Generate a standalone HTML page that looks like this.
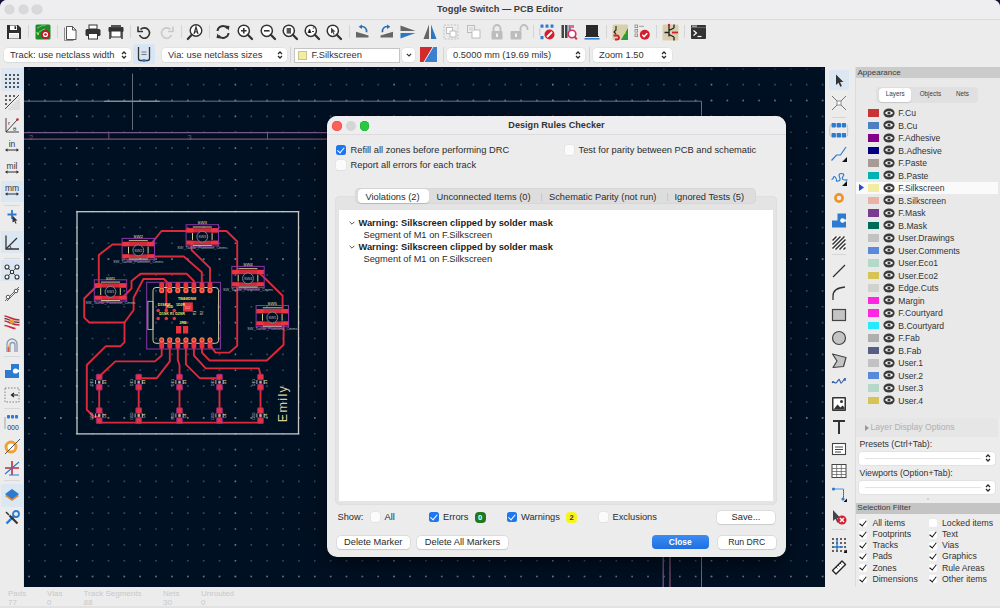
<!DOCTYPE html><html><head><meta charset="utf-8"><style>
*{box-sizing:border-box;margin:0;padding:0}
html,body{width:1000px;height:608px;overflow:hidden;background:#10143a;font-family:"Liberation Sans",sans-serif;color:#2a2a2a}
.a{position:absolute}
svg{overflow:visible}
#win{position:absolute;left:0;top:0;width:1000px;height:608px;background:#ececec;border-radius:7px 7px 0 0;overflow:hidden}
.tl{width:9.5px;height:9.5px;border-radius:50%;background:#d9d9db;top:4.75px;box-shadow:0 0 0 .5px #d2d2d4}
.dd{background:#fff;border-radius:4px;height:14px;font-size:9.35px;line-height:14px;padding-left:6px;color:#333;box-shadow:0 0 0 .5px #dcdcdc,0 .5px 1px rgba(0,0,0,.08);white-space:nowrap}
.sep{width:1px;background:#d4d4d4}
.st{font-size:8px;color:#c8c8c8;line-height:8px;white-space:nowrap}
.lbl{font-size:9.3px;line-height:12px;white-space:nowrap;color:#2b2b2b}
.cbx{width:9.5px;height:9.5px;border-radius:2.5px;background:#fbfbfb;box-shadow:0 0 0 .5px #e0e0e0,0 .5px 1px rgba(0,0,0,.06)}
.cbx.on{background:#1f76ee;box-shadow:none}
.cbx.on::after{content:"";position:absolute;left:2.6px;top:0.6px;width:3px;height:5.5px;border:solid #fff;border-width:0 1.6px 1.6px 0;transform:rotate(40deg)}
.btn{height:13.5px;background:#fff;border-radius:4px;box-shadow:0 0 0 .5px #cfcfcf,0 .5px 1px rgba(0,0,0,.15);font-size:9.3px;line-height:13.5px;text-align:center;color:#2b2b2b;white-space:nowrap}
.ly{position:absolute;left:0;width:147px;height:12.5px}
.ly .sw{position:absolute;left:15px;top:2.5px;width:11px;height:7.5px}
.ly .eye{position:absolute;left:30px;top:1.25px;line-height:0}.ly .eye svg{display:block}
.ly .t{position:absolute;left:45px;top:0.7px;font-size:8.6px;line-height:12.5px;color:#333;white-space:nowrap}
.sf{position:absolute;font-size:8.7px;line-height:11px;color:#333;white-space:nowrap}
.ck{position:absolute;width:8px;height:8px;background:#fff;border-radius:2px}
.ck.no::after{display:none}
.ck::after{content:"";position:absolute;left:2.4px;top:-0.6px;width:2.6px;height:6px;border:solid #111;border-width:0 1.4px 1.4px 0;transform:rotate(38deg)}
</style></head><body><div id="win"><div class="a" style="left:0;top:0;width:1000px;height:20px;background:#eeeef0;border-bottom:1px solid #dcdcdc"></div><div class="a tl" style="left:4.75px"></div><div class="a tl" style="left:18.5px"></div><div class="a tl" style="left:32.25px"></div><div class="a" style="left:0;width:1000px;top:3px;text-align:center;font-size:9.3px;font-weight:bold;color:#3c3c3c;line-height:12px">Toggle Switch — PCB Editor</div><svg class="a" style="left:6px;top:23.5px" width="16" height="16" viewBox="0 0 16 16"><path d="M1 1h11l3 3v11H1z" fill="#2e2e2e"/><rect x="4" y="1.5" width="7" height="4.5" fill="#fff"/><rect x="8.5" y="2.2" width="1.6" height="2.8" fill="#2e2e2e"/><rect x="3" y="9" width="10" height="5.5" fill="#fff"/><path d="M4 11h8M4 13h8" stroke="#bbb" stroke-width=".6"/></svg><div class="a sep" style="left:28px;top:25px;height:13px"></div><svg class="a" style="left:35px;top:23.5px" width="16" height="16" viewBox="0 0 16 16"><rect x="0.5" y="0.5" width="15" height="15" rx="1.5" fill="#1f8a2a"/><path d="M2 4c3-1 5-3 9-3M1 9c4 0 6-4 9-4" stroke="#6fd16f" stroke-width="1" fill="none"/><circle cx="3" cy="10" r="1" fill="#e8e050"/><circle cx="10.5" cy="10.5" r="4.6" fill="#c8142a"/><circle cx="10.5" cy="10.5" r="2.6" fill="#fff"/><circle cx="10.5" cy="10.5" r="1.3" fill="#c8142a"/></svg><div class="a sep" style="left:56.5px;top:25px;height:13px"></div><svg class="a" style="left:63px;top:23.5px" width="16" height="16" viewBox="0 0 16 16"><path d="M3.5 2.5h6l3.5 3.5v9.5h-9.5z" fill="#fff" stroke="#444" stroke-width=".9"/><path d="M9.5 2.5v3.5h3.5" fill="none" stroke="#444" stroke-width=".9"/><path d="M1.5 3.5v13h9" fill="none" stroke="#777" stroke-width=".8"/></svg><svg class="a" style="left:85px;top:23.5px" width="16" height="16" viewBox="0 0 16 16"><rect x="4" y="1" width="8" height="4" fill="#fff" stroke="#333" stroke-width="1"/><rect x="0.5" y="5" width="15" height="7" rx="1.5" fill="#333"/><rect x="3.5" y="9.5" width="9" height="5.5" fill="#fff" stroke="#333" stroke-width="1"/></svg><svg class="a" style="left:107.5px;top:23.5px" width="16" height="16" viewBox="0 0 16 16"><rect x="0.5" y="3" width="15" height="5" rx="1" fill="#333"/><rect x="3" y="1" width="10" height="2.5" fill="#555"/><rect x="3" y="7" width="10" height="6" fill="#fff" stroke="#333"/><path d="M2 8v7M14 8v7" stroke="#333" stroke-width="1.5"/></svg><div class="a sep" style="left:129.5px;top:25px;height:13px"></div><svg class="a" style="left:135.5px;top:23.5px" width="16" height="16" viewBox="0 0 16 16"><path d="M4.5 5.5A5.2 5.2 0 1 1 3.5 11" fill="none" stroke="#333" stroke-width="1.6"/><path d="M2 2.5v5h5" fill="none" stroke="#333" stroke-width="1.6"/></svg><svg class="a" style="left:159px;top:23.5px" width="16" height="16" viewBox="0 0 16 16"><path d="M11.5 5.5A5.2 5.2 0 1 0 12.5 11" fill="none" stroke="#c9c9c9" stroke-width="1.6"/><path d="M14 2.5v5h-5" fill="none" stroke="#c9c9c9" stroke-width="1.6"/></svg><div class="a sep" style="left:180.5px;top:25px;height:13px"></div><svg class="a" style="left:187px;top:23.5px" width="16" height="16" viewBox="0 0 16 16"><circle cx="9" cy="6.5" r="5.8" fill="#fff" stroke="#333" stroke-width="1.4"/><path d="M4.8 10.8L0.8 15" stroke="#333" stroke-width="2.2" stroke-linecap="round"/><path d="M7 10l2-7 2 7M7.7 7.8h2.6" fill="none" stroke="#333" stroke-width="1.2"/></svg><div class="a sep" style="left:208.5px;top:25px;height:13px"></div><svg class="a" style="left:214.5px;top:23.5px" width="16" height="16" viewBox="0 0 16 16"><path d="M2.5 7A5.5 5.5 0 0 1 12.5 4.5" fill="none" stroke="#333" stroke-width="2"/><path d="M13.5 9A5.5 5.5 0 0 1 3.5 11.5" fill="none" stroke="#333" stroke-width="2"/><path d="M10 1.5l4.5 0.5-0.8 4.5z" fill="#333"/><path d="M6 14.5l-4.5-0.5 0.8-4.5z" fill="#333"/></svg><svg class="a" style="left:237px;top:23.5px" width="16" height="16" viewBox="0 0 16 16"><circle cx="6.8" cy="6.8" r="5.6" fill="#fff" stroke="#333" stroke-width="1.5"/><path d="M10.8 10.8L15 15" stroke="#333" stroke-width="2.3" stroke-linecap="round"/><path d="M4 6.8h5.6M6.8 4v5.6" stroke="#333" stroke-width="1.6"/></svg><svg class="a" style="left:259.5px;top:23.5px" width="16" height="16" viewBox="0 0 16 16"><circle cx="6.8" cy="6.8" r="5.6" fill="#fff" stroke="#333" stroke-width="1.5"/><path d="M10.8 10.8L15 15" stroke="#333" stroke-width="2.3" stroke-linecap="round"/><path d="M4 6.8h5.6" stroke="#333" stroke-width="1.6"/></svg><svg class="a" style="left:282px;top:23.5px" width="16" height="16" viewBox="0 0 16 16"><circle cx="6.8" cy="6.8" r="5.6" fill="#fff" stroke="#333" stroke-width="1.5"/><path d="M10.8 10.8L15 15" stroke="#333" stroke-width="2.3" stroke-linecap="round"/><rect x="4.6" y="4" width="4.4" height="5.6" fill="#555"/></svg><svg class="a" style="left:304px;top:23.5px" width="16" height="16" viewBox="0 0 16 16"><circle cx="6.8" cy="6.8" r="5.6" fill="#fff" stroke="#333" stroke-width="1.5"/><path d="M10.8 10.8L15 15" stroke="#333" stroke-width="2.3" stroke-linecap="round"/><path d="M4 9l1.5-4 1.5 4M8 7.5h2" stroke="#444" stroke-width="1"/><circle cx="9.5" cy="4" r=".8" fill="#444"/></svg><svg class="a" style="left:326px;top:23.5px" width="16" height="16" viewBox="0 0 16 16"><circle cx="6.8" cy="6.8" r="5.6" fill="#fff" stroke="#333" stroke-width="1.5"/><path d="M10.8 10.8L15 15" stroke="#333" stroke-width="2.3" stroke-linecap="round"/><path d="M5 3.5l4.5 4-2 .3 1.2 2.5-1 .5-1.2-2.5-1.5 1.2z" fill="#444"/></svg><div class="a sep" style="left:348.5px;top:25px;height:13px"></div><svg class="a" style="left:354.5px;top:23.5px" width="16" height="16" viewBox="0 0 16 16"><path d="M1 7.7L13.5 11.5V13.5H1z" fill="#666"/><path d="M11.5 8.2A4.6 4.6 0 0 0 6.2 2.6" fill="none" stroke="#2b6fb0" stroke-width="1.7"/><path d="M3.6 2.8l3.4-2.3v4.6z" fill="#2b6fb0"/></svg><svg class="a" style="left:377.5px;top:23.5px" width="16" height="16" viewBox="0 0 16 16"><path d="M15 7.7L2.5 11.5V13.5H15z" fill="#666"/><path d="M4.5 8.2A4.6 4.6 0 0 1 9.8 2.6" fill="none" stroke="#2b6fb0" stroke-width="1.7"/><path d="M12.4 2.8l-3.4-2.3v4.6z" fill="#2b6fb0"/></svg><svg class="a" style="left:399.5px;top:23.5px" width="16" height="16" viewBox="0 0 16 16"><path d="M0.5 1.5L15.5 7H0.5z" fill="#666"/><path d="M0.5 9H15.5L0.5 14.5z" fill="#2b78c2"/></svg><svg class="a" style="left:421.5px;top:23.5px" width="16" height="16" viewBox="0 0 16 16"><path d="M7 0.5L1.5 15H7z" fill="#666"/><path d="M9 0.5V15h5.5z" fill="#2b78c2"/></svg><svg class="a" style="left:443px;top:23.5px" width="16" height="16" viewBox="0 0 16 16"><rect x="1" y="1" width="14" height="14" fill="none" stroke="#c4c4c4" stroke-dasharray="2 1.3"/><rect x="3.5" y="3.5" width="6" height="6" fill="#fff" stroke="#bcbcbc"/><rect x="7" y="7" width="6" height="6" fill="#fff" stroke="#bcbcbc"/></svg><svg class="a" style="left:466px;top:23.5px" width="16" height="16" viewBox="0 0 16 16"><rect x="1.5" y="1.5" width="7" height="7" fill="#fff" stroke="#bcbcbc"/><rect x="6" y="6" width="8" height="8" fill="#fff" stroke="#bcbcbc"/><rect x="2.5" y="2.5" width="5" height="5" fill="#ddd"/></svg><svg class="a" style="left:488.5px;top:23.5px" width="16" height="16" viewBox="0 0 16 16"><path d="M4.5 7V4.5a3.5 3.5 0 0 1 7 0V7" fill="none" stroke="#bdbdbd" stroke-width="1.8"/><rect x="2.5" y="7" width="11" height="8.5" rx="1" fill="#bdbdbd"/><rect x="7.2" y="9.5" width="1.6" height="3.5" fill="#fff"/></svg><svg class="a" style="left:509.5px;top:23.5px" width="16" height="16" viewBox="0 0 16 16"><path d="M10.5 7V4.5a3.5 3.5 0 0 1 7 0V6" fill="none" stroke="#bdbdbd" stroke-width="1.8"/><rect x="0.5" y="7" width="11" height="8.5" rx="1" fill="#bdbdbd"/><rect x="5.2" y="9.5" width="1.6" height="3.5" fill="#fff"/></svg><div class="a sep" style="left:533px;top:25px;height:13px"></div><svg class="a" style="left:538.5px;top:23.5px" width="16" height="16" viewBox="0 0 16 16"><g fill="#2f7bcf"><rect x="1.5" y="0.5" width="3" height="3.3" rx=".6"/><rect x="6.5" y="0.5" width="3" height="3.3" rx=".6"/><rect x="11.5" y="0.5" width="3" height="3.3" rx=".6"/><rect x="1.5" y="12" width="3" height="3.3" rx=".6"/></g><path d="M0.8 4.5v7" stroke="#aaa" stroke-width=".6"/><circle cx="10.5" cy="10.5" r="5" fill="#d51d2e"/><path d="M8 13l5-5" stroke="#fff" stroke-width="1.8"/></svg><svg class="a" style="left:561px;top:23.5px" width="16" height="16" viewBox="0 0 16 16"><g fill="#444"><rect x="0.5" y="1" width="2.5" height="13"/><rect x="4" y="1" width="2.5" height="13"/></g><rect x="7.5" y="1" width="2.5" height="7" fill="#6a7fa8"/><circle cx="11" cy="10" r="3.8" fill="#fff" stroke="#d1315a" stroke-width="1.6"/><path d="M13.5 12.5l2.3 2.8" stroke="#d1315a" stroke-width="2"/><rect x="9" y="1" width="4" height="3" fill="#d86f9a"/></svg><svg class="a" style="left:584px;top:23.5px" width="16" height="16" viewBox="0 0 16 16"><rect x="2" y="1" width="12" height="11" fill="#2a2a2a"/><path d="M1 12.5h14" stroke="#2a2a2a" stroke-width="1"/><path d="M0.5 14.8h15" stroke="#2d7bd0" stroke-width="1.5"/></svg><div class="a sep" style="left:606px;top:25px;height:13px"></div><svg class="a" style="left:611.5px;top:23.5px" width="16" height="16" viewBox="0 0 16 16"><rect x="0.5" y="0.5" width="15.5" height="15.5" rx="1.5" fill="#d9cfa8"/><path d="M9 16L16 4v12z" fill="#2e9a3a"/><path d="M4 2v4l-2 2 2 2" stroke="#222" fill="none" stroke-width="1.1"/><path d="M1.5 11.5h3.5a2 2 0 0 1 0 4H3" stroke="#d51d2e" stroke-width="1.8" fill="none"/><circle cx="12.5" cy="9" r="1" fill="#e8e050"/></svg><svg class="a" style="left:634px;top:23.5px" width="16" height="16" viewBox="0 0 16 16"><g fill="none" stroke="#888" stroke-width=".8"><rect x="1" y="1" width="2.6" height="2.6"/><rect x="1" y="5.5" width="2.6" height="2.6"/><rect x="1" y="10" width="2.6" height="2.6"/></g><path d="M5 2.3h5" stroke="#888" stroke-width=".8"/><circle cx="10.8" cy="10.8" r="5" fill="#d51d2e"/><path d="M8.3 10.8l1.8 1.8 3.2-3.4" stroke="#fff" stroke-width="1.6" fill="none"/></svg><div class="a sep" style="left:656px;top:25px;height:13px"></div><svg class="a" style="left:662px;top:23.5px" width="16" height="16" viewBox="0 0 16 16"><rect x="0.5" y="0.5" width="16" height="16" rx="1.5" fill="#d9cfae"/><path d="M7 0.5v4M7 4.5v8M2.5 8.5H7M7 6.5l5-2.5M7 10.5l5 2.5M12 13v3.5M12 4V0.5" stroke="#222" stroke-width="1.3" fill="none"/><path d="M10 8.5h6" stroke="#d51d2e" stroke-width="1.8"/><circle cx="7" cy="1" r="1.2" fill="#d51d2e"/></svg><div class="a sep" style="left:684px;top:25px;height:13px"></div><svg class="a" style="left:691px;top:23.5px" width="16" height="16" viewBox="0 0 16 16"><rect x="0" y="1" width="15" height="14" rx="1" fill="#333"/><path d="M0 3.5h15" stroke="#888" stroke-width=".6"/><rect x="1" y="1.5" width="5" height="1.3" fill="#bbb"/><path d="M2.5 6.5l3 2.5-3 2.5" stroke="#fff" stroke-width="1.2" fill="none"/><path d="M6.5 12.5h4" stroke="#fff" stroke-width="1.2"/></svg><div class="a dd" style="left:4px;top:48px;width:127px">Track: use netclass width<svg class="a" style="right:4.5px;top:3px" width="6" height="8" viewBox="0 0 6 8"><path d="M1 3L3 1 5 3M1 5L3 7 5 5" fill="none" stroke="#2a2a2a" stroke-width="1.25"/></svg></div><div class="a" style="left:133px;top:44px;width:22px;height:20px;background:#d8e5f5;border-radius:3px"></div><svg class="a" style="left:136px;top:46px" width="16" height="16" viewBox="0 0 16 16"><path d="M2.5 1v11.5q0 2 2 2h7q2 0 2-2V1" fill="none" stroke="#333" stroke-width="1.3"/><path d="M5.5 6h5M5.5 8.5h5" stroke="#555" stroke-width=".8"/><circle cx="8" cy="14.5" r="1.6" fill="#2d7bd0"/></svg><div class="a dd" style="left:162px;top:48px;width:125px">Via: use netclass sizes<svg class="a" style="right:4.5px;top:3px" width="6" height="8" viewBox="0 0 6 8"><path d="M1 3L3 1 5 3M1 5L3 7 5 5" fill="none" stroke="#2a2a2a" stroke-width="1.25"/></svg></div><div class="a sep" style="left:290px;top:47px;height:16px"></div><div class="a" style="left:294px;top:47.5px;width:105.5px;height:15px;background:#fff;border:1px solid #c4c4c4;font-size:9.35px;line-height:13px;padding-left:16.5px;color:#333;white-space:nowrap">F.Silkscreen<div class="a" style="left:2.5px;top:2.5px;width:9.5px;height:8.5px;background:#f2eda1;border:.5px solid #c8c38a"></div></div><div class="a dd" style="left:402px;top:48px;width:13px;padding:0"><svg class="a" style="left:3.5px;top:5px" width="6" height="4" viewBox="0 0 6 4"><path d="M.8 .8L3 3 5.2 .8" fill="none" stroke="#333" stroke-width="1.1"/></svg></div><svg class="a" style="left:420px;top:47px" width="17" height="15" viewBox="0 0 17 15"><path d="M0 0h13L4 15H0z" fill="#d22b2b"/><path d="M13 0h4v15H4z" fill="#3a7fd0"/><path d="M13 0L4 15" stroke="#eee" stroke-width="1"/></svg><div class="a sep" style="left:443px;top:47px;height:16px"></div><div class="a dd" style="left:447px;top:48px;width:138px">0.5000 mm (19.69 mils)<svg class="a" style="right:4.5px;top:3px" width="6" height="8" viewBox="0 0 6 8"><path d="M1 3L3 1 5 3M1 5L3 7 5 5" fill="none" stroke="#2a2a2a" stroke-width="1.25"/></svg></div><div class="a sep" style="left:589px;top:47px;height:16px"></div><div class="a dd" style="left:593px;top:48px;width:78.5px">Zoom 1.50<svg class="a" style="right:4.5px;top:3px" width="6" height="8" viewBox="0 0 6 8"><path d="M1 3L3 1 5 3M1 5L3 7 5 5" fill="none" stroke="#2a2a2a" stroke-width="1.25"/></svg></div><div class="a" style="left:0;top:67px;width:24px;height:520px;background:#ececec"></div><div class="a" style="left:23px;top:67px;width:1px;height:520px;background:#e2e2e2"></div><div class="a" style="left:1px;top:68px;width:21.5px;height:23px;background:#dce7f4"></div><div class="a" style="left:1px;top:180.5px;width:21.5px;height:21.5px;background:#dce7f4"></div><div class="a" style="left:1px;top:231px;width:21.5px;height:21.5px;background:#dce7f4"></div><div class="a" style="left:1px;top:259.5px;width:21.5px;height:21px;background:#dce7f4"></div><div class="a" style="left:1px;top:484px;width:21.5px;height:23px;background:#dce7f4"></div><svg class="a" style="left:4px;top:72.5px" width="16" height="16" viewBox="0 0 16 16"><circle cx="2" cy="2" r="1.1" fill="#333"/><circle cx="2" cy="6" r="1.1" fill="#333"/><circle cx="2" cy="10" r="1.1" fill="#333"/><circle cx="2" cy="14" r="1.1" fill="#333"/><circle cx="6" cy="2" r="1.1" fill="#333"/><circle cx="6" cy="6" r="1.1" fill="#333"/><circle cx="6" cy="10" r="1.1" fill="#333"/><circle cx="6" cy="14" r="1.1" fill="#333"/><circle cx="10" cy="2" r="1.1" fill="#333"/><circle cx="10" cy="6" r="1.1" fill="#333"/><circle cx="10" cy="10" r="1.1" fill="#333"/><circle cx="10" cy="14" r="1.1" fill="#333"/><circle cx="14" cy="2" r="1.1" fill="#333"/><circle cx="14" cy="6" r="1.1" fill="#333"/><circle cx="14" cy="10" r="1.1" fill="#333"/><circle cx="14" cy="14" r="1.1" fill="#333"/></svg><svg class="a" style="left:4px;top:94px" width="16" height="16" viewBox="0 0 16 16"><circle cx="2" cy="2" r="1" fill="#333"/><circle cx="2" cy="6" r="1" fill="#333"/><circle cx="2" cy="10" r="1" fill="#333"/><circle cx="6" cy="2" r="1" fill="#333"/><circle cx="6" cy="6" r="1" fill="#333"/><circle cx="10" cy="2" r="1" fill="#333"/><circle cx="5" cy="15" r=".45" fill="#777"/><circle cx="7" cy="13" r=".45" fill="#777"/><circle cx="7" cy="15" r=".45" fill="#777"/><circle cx="9" cy="11" r=".45" fill="#777"/><circle cx="9" cy="13" r=".45" fill="#777"/><circle cx="9" cy="15" r=".45" fill="#777"/><circle cx="11" cy="9" r=".45" fill="#777"/><circle cx="11" cy="11" r=".45" fill="#777"/><circle cx="11" cy="13" r=".45" fill="#777"/><circle cx="11" cy="15" r=".45" fill="#777"/><circle cx="13" cy="7" r=".45" fill="#777"/><circle cx="13" cy="9" r=".45" fill="#777"/><circle cx="13" cy="11" r=".45" fill="#777"/><circle cx="13" cy="13" r=".45" fill="#777"/><circle cx="13" cy="15" r=".45" fill="#777"/><circle cx="15" cy="5" r=".45" fill="#777"/><circle cx="15" cy="7" r=".45" fill="#777"/><circle cx="15" cy="9" r=".45" fill="#777"/><circle cx="15" cy="11" r=".45" fill="#777"/><circle cx="15" cy="13" r=".45" fill="#777"/><circle cx="15" cy="15" r=".45" fill="#777"/><path d="M1 15L15 1" stroke="#333" stroke-width=".9"/></svg><svg class="a" style="left:4px;top:117px" width="16" height="16" viewBox="0 0 16 16"><path d="M2 1v14h13" fill="none" stroke="#333" stroke-width=".9"/><path d="M2 15L13 3" stroke="#333" stroke-width=".9"/><circle cx="13.5" cy="2.5" r="1.3" fill="#d51d2e"/><text x="4" y="7.5" font-size="6" fill="#333" font-family="Liberation Sans">r</text><text x="9" y="13.5" font-size="6" fill="#333" font-family="Liberation Sans">θ</text></svg><svg class="a" style="left:4px;top:139px" width="16" height="16" viewBox="0 0 16 16"><text x="8" y="8" font-size="8.5" fill="#333" text-anchor="middle" font-family="Liberation Sans">in</text><path d="M2 11h12" stroke="#333" stroke-width="1"/><path d="M1 11l2.5-1.8v3.6zM15 11l-2.5-1.8v3.6z" fill="#333"/></svg><svg class="a" style="left:4px;top:161px" width="16" height="16" viewBox="0 0 16 16"><text x="8" y="8" font-size="8.5" fill="#333" text-anchor="middle" font-family="Liberation Sans">mil</text><path d="M2 11h12" stroke="#333" stroke-width="1"/><path d="M1 11l2.5-1.8v3.6zM15 11l-2.5-1.8v3.6z" fill="#333"/></svg><svg class="a" style="left:4px;top:183px" width="16" height="16" viewBox="0 0 16 16"><text x="8" y="8" font-size="8.5" fill="#333" text-anchor="middle" font-family="Liberation Sans">mm</text><path d="M2 11h12" stroke="#333" stroke-width="1"/><path d="M1 11l2.5-1.8v3.6zM15 11l-2.5-1.8v3.6z" fill="#333"/></svg><div class="a" style="left:4px;top:205px;width:16px;height:1px;background:#d8d8d8"></div><svg class="a" style="left:4px;top:208px" width="16" height="16" viewBox="0 0 16 16"><path d="M8 2v9M3.5 6.5h9" stroke="#2d7bd0" stroke-width="1.8"/><path d="M8.5 7.5l5 5-2.2.2 1.3 2.5-1 .5-1.3-2.5-1.8 1.3z" fill="#333"/></svg><svg class="a" style="left:4px;top:234px" width="16" height="16" viewBox="0 0 16 16"><path d="M2 1.5V15h13" fill="none" stroke="#333" stroke-width="1.3"/><path d="M2 15L13 4" stroke="#333" stroke-width="1.3"/><path d="M7 15a5 5 0 0 0-1.5-3.5" fill="none" stroke="#333" stroke-width="1"/></svg><div class="a" style="left:4px;top:258px;width:16px;height:1px;background:#d8d8d8"></div><svg class="a" style="left:4px;top:264px" width="16" height="16" viewBox="0 0 16 16"><path d="M3 3l5 5 5-5M3 13l5-5 5 5" stroke="#555" stroke-width="1" fill="none"/><g fill="#fff" stroke="#333" stroke-width="1.1"><circle cx="3" cy="3" r="2"/><circle cx="13" cy="3" r="2"/><circle cx="3" cy="13" r="2"/><circle cx="13" cy="13" r="2"/><circle cx="8" cy="8" r="1.7"/></g></svg><svg class="a" style="left:4px;top:286px" width="16" height="16" viewBox="0 0 16 16"><path d="M1 15L15 1M3 15L15 3" stroke="#666" stroke-width="1"/><g fill="#fff" stroke="#555" stroke-width="1"><circle cx="4" cy="11" r="1.8"/><circle cx="12" cy="5" r="1.8"/></g></svg><svg class="a" style="left:4px;top:313px" width="16" height="16" viewBox="0 0 16 16"><path d="M0.5 3c4 0 7 4 15 4M0.5 8c4 0 7 4 15 4M0.5 12.5c4 0 7 3 11 3" stroke="#c62a3a" stroke-width="1.6" fill="none"/><path d="M0.5 5.5c4 0 7 4 15 4" stroke="#444" stroke-width="1.3" fill="none"/><circle cx="8" cy="8.5" r="2.2" fill="#f0a030"/></svg><svg class="a" style="left:4px;top:336px" width="16" height="16" viewBox="0 0 16 16"><path d="M3 16V8a5 5 0 0 1 10 0v8M6 16V9a2.5 2.5 0 0 1 5 0v7" stroke="#8a9bb8" stroke-width="1.3" fill="none"/><path d="M4.5 16v-5" stroke="#e05050" stroke-width="1.6"/><circle cx="4.5" cy="10" r="1.3" fill="#f0c040"/></svg><div class="a" style="left:4px;top:356px;width:16px;height:1px;background:#d8d8d8"></div><svg class="a" style="left:4px;top:362px" width="16" height="16" viewBox="0 0 16 16"><path d="M1 16V8h6V2h8v14z" fill="#2d7bd0"/><circle cx="11.5" cy="9" r="2.6" fill="#fff"/><rect x="11.5" y="7.8" width="4" height="2.4" fill="#fff"/></svg><svg class="a" style="left:4px;top:387px" width="16" height="16" viewBox="0 0 16 16"><rect x="1" y="1" width="14" height="14" fill="none" stroke="#777" stroke-width=".9" stroke-dasharray="1.5 1.5"/><path d="M8 8h6M10 6l-2.5 2 2.5 2" stroke="#222" stroke-width="1.2" fill="none"/></svg><div class="a" style="left:4px;top:408px;width:16px;height:1px;background:#d8d8d8"></div><svg class="a" style="left:4px;top:415px" width="16" height="16" viewBox="0 0 16 16"><g fill="#2d7bd0"><rect x="3" y="0" width="3" height="3.5" rx=".8"/><rect x="7" y="0" width="3" height="3.5" rx=".8"/><rect x="11" y="0" width="3" height="3.5" rx=".8"/></g><path d="M1 2v12" stroke="#888" stroke-width=".7"/><text x="9" y="14.5" font-size="7" fill="#333" text-anchor="middle" font-family="Liberation Sans">000</text></svg><svg class="a" style="left:4px;top:438px" width="16" height="16" viewBox="0 0 16 16"><circle cx="7" cy="9" r="6.5" fill="#f0a030"/><circle cx="7" cy="9" r="3.5" fill="#fff"/><path d="M1 16L16 1" stroke="#555" stroke-width="1"/></svg><svg class="a" style="left:4px;top:460px" width="16" height="16" viewBox="0 0 16 16"><path d="M8 1v14M1 8h14" stroke="#c62a3a" stroke-width="1.6"/><path d="M1 14L15 2M5 15h10" stroke="#2d7bd0" stroke-width="1.2"/></svg><div class="a" style="left:4px;top:480px;width:16px;height:1px;background:#d8d8d8"></div><svg class="a" style="left:4px;top:487.5px" width="16" height="16" viewBox="0 0 16 16"><path d="M8 3l7 5-7 5-7-5z" fill="#e08a2a"/><path d="M8 1l7 5-7 5-7-5z" fill="#2d7bd0"/></svg><svg class="a" style="left:4px;top:510px" width="16" height="16" viewBox="0 0 16 16"><path d="M2.5 13.5l8-8" stroke="#2d7bd0" stroke-width="2.4"/><circle cx="12" cy="4" r="3" fill="none" stroke="#2d7bd0" stroke-width="1.8"/><path d="M13.5 13.5l-8-8" stroke="#333" stroke-width="2.2"/><path d="M2 2l3 3" stroke="#333" stroke-width="1.5"/></svg><svg class="a" style="left:24px;top:67px;overflow:hidden" width="801" height="520" viewBox="0 0 801 520"><defs><pattern id="grid" x="13" y="1.6" width="15.87" height="15.87" patternUnits="userSpaceOnUse"><rect x="-0.6" y="-0.6" width="1.3" height="1.3" fill="#4a5462"/></pattern></defs><rect x="0" y="0" width="801" height="520" fill="#001023"/><g><line x1="5.10" y1="1.73" x2="5.10" y2="520" stroke="#3f4a59" stroke-width="1.6" stroke-dasharray="1.6 14.27" stroke-dashoffset="0.8"/><line x1="20.97" y1="1.73" x2="20.97" y2="520" stroke="#3f4a59" stroke-width="1.6" stroke-dasharray="1.6 14.27" stroke-dashoffset="0.8"/><line x1="36.84" y1="1.73" x2="36.84" y2="520" stroke="#3f4a59" stroke-width="1.6" stroke-dasharray="1.6 14.27" stroke-dashoffset="0.8"/><line x1="52.71" y1="1.73" x2="52.71" y2="520" stroke="#6f7986" stroke-width="1.6" stroke-dasharray="1.6 14.27" stroke-dashoffset="0.8"/><line x1="68.58" y1="1.73" x2="68.58" y2="520" stroke="#3f4a59" stroke-width="1.6" stroke-dasharray="1.6 14.27" stroke-dashoffset="0.8"/><line x1="84.45" y1="1.73" x2="84.45" y2="520" stroke="#3f4a59" stroke-width="1.6" stroke-dasharray="1.6 14.27" stroke-dashoffset="0.8"/><line x1="100.32" y1="1.73" x2="100.32" y2="520" stroke="#3f4a59" stroke-width="1.6" stroke-dasharray="1.6 14.27" stroke-dashoffset="0.8"/><line x1="116.19" y1="1.73" x2="116.19" y2="520" stroke="#3f4a59" stroke-width="1.6" stroke-dasharray="1.6 14.27" stroke-dashoffset="0.8"/><line x1="132.06" y1="1.73" x2="132.06" y2="520" stroke="#3f4a59" stroke-width="1.6" stroke-dasharray="1.6 14.27" stroke-dashoffset="0.8"/><line x1="147.93" y1="1.73" x2="147.93" y2="520" stroke="#3f4a59" stroke-width="1.6" stroke-dasharray="1.6 14.27" stroke-dashoffset="0.8"/><line x1="163.80" y1="1.73" x2="163.80" y2="520" stroke="#3f4a59" stroke-width="1.6" stroke-dasharray="1.6 14.27" stroke-dashoffset="0.8"/><line x1="179.67" y1="1.73" x2="179.67" y2="520" stroke="#3f4a59" stroke-width="1.6" stroke-dasharray="1.6 14.27" stroke-dashoffset="0.8"/><line x1="195.54" y1="1.73" x2="195.54" y2="520" stroke="#3f4a59" stroke-width="1.6" stroke-dasharray="1.6 14.27" stroke-dashoffset="0.8"/><line x1="211.41" y1="1.73" x2="211.41" y2="520" stroke="#6f7986" stroke-width="1.6" stroke-dasharray="1.6 14.27" stroke-dashoffset="0.8"/><line x1="227.28" y1="1.73" x2="227.28" y2="520" stroke="#3f4a59" stroke-width="1.6" stroke-dasharray="1.6 14.27" stroke-dashoffset="0.8"/><line x1="243.15" y1="1.73" x2="243.15" y2="520" stroke="#3f4a59" stroke-width="1.6" stroke-dasharray="1.6 14.27" stroke-dashoffset="0.8"/><line x1="259.02" y1="1.73" x2="259.02" y2="520" stroke="#3f4a59" stroke-width="1.6" stroke-dasharray="1.6 14.27" stroke-dashoffset="0.8"/><line x1="274.89" y1="1.73" x2="274.89" y2="520" stroke="#3f4a59" stroke-width="1.6" stroke-dasharray="1.6 14.27" stroke-dashoffset="0.8"/><line x1="290.76" y1="1.73" x2="290.76" y2="520" stroke="#3f4a59" stroke-width="1.6" stroke-dasharray="1.6 14.27" stroke-dashoffset="0.8"/><line x1="306.63" y1="1.73" x2="306.63" y2="520" stroke="#3f4a59" stroke-width="1.6" stroke-dasharray="1.6 14.27" stroke-dashoffset="0.8"/><line x1="322.50" y1="1.73" x2="322.50" y2="520" stroke="#3f4a59" stroke-width="1.6" stroke-dasharray="1.6 14.27" stroke-dashoffset="0.8"/><line x1="338.37" y1="1.73" x2="338.37" y2="520" stroke="#3f4a59" stroke-width="1.6" stroke-dasharray="1.6 14.27" stroke-dashoffset="0.8"/><line x1="354.24" y1="1.73" x2="354.24" y2="520" stroke="#3f4a59" stroke-width="1.6" stroke-dasharray="1.6 14.27" stroke-dashoffset="0.8"/><line x1="370.11" y1="1.73" x2="370.11" y2="520" stroke="#6f7986" stroke-width="1.6" stroke-dasharray="1.6 14.27" stroke-dashoffset="0.8"/><line x1="385.98" y1="1.73" x2="385.98" y2="520" stroke="#3f4a59" stroke-width="1.6" stroke-dasharray="1.6 14.27" stroke-dashoffset="0.8"/><line x1="401.85" y1="1.73" x2="401.85" y2="520" stroke="#3f4a59" stroke-width="1.6" stroke-dasharray="1.6 14.27" stroke-dashoffset="0.8"/><line x1="417.72" y1="1.73" x2="417.72" y2="520" stroke="#3f4a59" stroke-width="1.6" stroke-dasharray="1.6 14.27" stroke-dashoffset="0.8"/><line x1="433.59" y1="1.73" x2="433.59" y2="520" stroke="#3f4a59" stroke-width="1.6" stroke-dasharray="1.6 14.27" stroke-dashoffset="0.8"/><line x1="449.46" y1="1.73" x2="449.46" y2="520" stroke="#3f4a59" stroke-width="1.6" stroke-dasharray="1.6 14.27" stroke-dashoffset="0.8"/><line x1="465.33" y1="1.73" x2="465.33" y2="520" stroke="#3f4a59" stroke-width="1.6" stroke-dasharray="1.6 14.27" stroke-dashoffset="0.8"/><line x1="481.20" y1="1.73" x2="481.20" y2="520" stroke="#3f4a59" stroke-width="1.6" stroke-dasharray="1.6 14.27" stroke-dashoffset="0.8"/><line x1="497.07" y1="1.73" x2="497.07" y2="520" stroke="#3f4a59" stroke-width="1.6" stroke-dasharray="1.6 14.27" stroke-dashoffset="0.8"/><line x1="512.94" y1="1.73" x2="512.94" y2="520" stroke="#3f4a59" stroke-width="1.6" stroke-dasharray="1.6 14.27" stroke-dashoffset="0.8"/><line x1="528.81" y1="1.73" x2="528.81" y2="520" stroke="#6f7986" stroke-width="1.6" stroke-dasharray="1.6 14.27" stroke-dashoffset="0.8"/><line x1="544.68" y1="1.73" x2="544.68" y2="520" stroke="#3f4a59" stroke-width="1.6" stroke-dasharray="1.6 14.27" stroke-dashoffset="0.8"/><line x1="560.55" y1="1.73" x2="560.55" y2="520" stroke="#3f4a59" stroke-width="1.6" stroke-dasharray="1.6 14.27" stroke-dashoffset="0.8"/><line x1="576.42" y1="1.73" x2="576.42" y2="520" stroke="#3f4a59" stroke-width="1.6" stroke-dasharray="1.6 14.27" stroke-dashoffset="0.8"/><line x1="592.29" y1="1.73" x2="592.29" y2="520" stroke="#3f4a59" stroke-width="1.6" stroke-dasharray="1.6 14.27" stroke-dashoffset="0.8"/><line x1="608.16" y1="1.73" x2="608.16" y2="520" stroke="#3f4a59" stroke-width="1.6" stroke-dasharray="1.6 14.27" stroke-dashoffset="0.8"/><line x1="624.03" y1="1.73" x2="624.03" y2="520" stroke="#3f4a59" stroke-width="1.6" stroke-dasharray="1.6 14.27" stroke-dashoffset="0.8"/><line x1="639.90" y1="1.73" x2="639.90" y2="520" stroke="#3f4a59" stroke-width="1.6" stroke-dasharray="1.6 14.27" stroke-dashoffset="0.8"/><line x1="655.77" y1="1.73" x2="655.77" y2="520" stroke="#3f4a59" stroke-width="1.6" stroke-dasharray="1.6 14.27" stroke-dashoffset="0.8"/><line x1="671.64" y1="1.73" x2="671.64" y2="520" stroke="#3f4a59" stroke-width="1.6" stroke-dasharray="1.6 14.27" stroke-dashoffset="0.8"/><line x1="687.51" y1="1.73" x2="687.51" y2="520" stroke="#6f7986" stroke-width="1.6" stroke-dasharray="1.6 14.27" stroke-dashoffset="0.8"/><line x1="703.38" y1="1.73" x2="703.38" y2="520" stroke="#3f4a59" stroke-width="1.6" stroke-dasharray="1.6 14.27" stroke-dashoffset="0.8"/><line x1="719.25" y1="1.73" x2="719.25" y2="520" stroke="#3f4a59" stroke-width="1.6" stroke-dasharray="1.6 14.27" stroke-dashoffset="0.8"/><line x1="735.12" y1="1.73" x2="735.12" y2="520" stroke="#3f4a59" stroke-width="1.6" stroke-dasharray="1.6 14.27" stroke-dashoffset="0.8"/><line x1="750.99" y1="1.73" x2="750.99" y2="520" stroke="#3f4a59" stroke-width="1.6" stroke-dasharray="1.6 14.27" stroke-dashoffset="0.8"/><line x1="766.86" y1="1.73" x2="766.86" y2="520" stroke="#3f4a59" stroke-width="1.6" stroke-dasharray="1.6 14.27" stroke-dashoffset="0.8"/><line x1="782.73" y1="1.73" x2="782.73" y2="520" stroke="#3f4a59" stroke-width="1.6" stroke-dasharray="1.6 14.27" stroke-dashoffset="0.8"/><line x1="798.60" y1="1.73" x2="798.60" y2="520" stroke="#3f4a59" stroke-width="1.6" stroke-dasharray="1.6 14.27" stroke-dashoffset="0.8"/><line x1="-10.77" y1="33.47" x2="801" y2="33.47" stroke="#6f7986" stroke-width="1.6" stroke-dasharray="1.6 14.27" stroke-dashoffset="0.8" opacity=".85"/><line x1="-10.77" y1="192.17" x2="801" y2="192.17" stroke="#6f7986" stroke-width="1.6" stroke-dasharray="1.6 14.27" stroke-dashoffset="0.8" opacity=".85"/><line x1="-10.77" y1="350.87" x2="801" y2="350.87" stroke="#6f7986" stroke-width="1.6" stroke-dasharray="1.6 14.27" stroke-dashoffset="0.8" opacity=".85"/><line x1="-10.77" y1="509.57" x2="801" y2="509.57" stroke="#6f7986" stroke-width="1.6" stroke-dasharray="1.6 14.27" stroke-dashoffset="0.8" opacity=".85"/></g><polyline points="0.0,34.2 677.5,34.2 677.5,523.0" fill="none" stroke="#6c727c" stroke-width="1" stroke-linejoin="round" stroke-linecap="round" /><polyline points="80.4,34.2 135.4,34.2" fill="none" stroke="#9aa0a8" stroke-width="1.1" stroke-linejoin="round" stroke-linecap="round" /><polyline points="108.5,7.0 108.5,62.6" fill="none" stroke="#7d848e" stroke-width="0.8" stroke-linejoin="round" stroke-linecap="round" /><polyline points="0.0,65.6 639.2,65.6 639.2,523.0" fill="none" stroke="#76588a" stroke-width="1.3" stroke-linejoin="round" stroke-linecap="round" /><polyline points="0.0,72.1 646.0,72.1 646.0,523.0" fill="none" stroke="#7e5070" stroke-width="1.3" stroke-linejoin="round" stroke-linecap="round" /><polyline points="84.8,65.6 84.8,72.2" fill="none" stroke="#7e5070" stroke-width="1" stroke-linejoin="round" stroke-linecap="round" /><polyline points="243.5,65.6 243.5,72.2" fill="none" stroke="#7e5070" stroke-width="1" stroke-linejoin="round" stroke-linecap="round" /><text x="7" y="72.5" font-size="8" fill="#7e5070" font-family="Liberation Sans" text-anchor="middle">2</text><text x="165.5" y="72.5" font-size="8" fill="#7e5070" font-family="Liberation Sans" text-anchor="middle">3</text><g transform="translate(-24,-67)"><rect x="77" y="211.7" width="221.5" height="222.2" fill="none" stroke="#c9c9c4" stroke-width="1.3"/><polyline points="127.2,244.5 112.4,244.5 98.8,255.0 98.8,287.0" fill="none" stroke="#dc2a3a" stroke-width="1.9" stroke-linejoin="round" stroke-linecap="round"/><polyline points="99.0,287.0 95.7,287.0 84.2,298.5 84.2,317.6 89.2,322.5 124.5,322.5 124.5,342.2 120.4,346.3 105.6,346.3 86.8,365.0 86.8,409.8 94.0,416.7 99.2,416.7" fill="none" stroke="#dc2a3a" stroke-width="1.9" stroke-linejoin="round" stroke-linecap="round"/><polyline points="124.5,322.5 133.6,310.0 133.6,297.8 143.4,279.0 164.0,279.0 169.8,285.0" fill="none" stroke="#dc2a3a" stroke-width="1.9" stroke-linejoin="round" stroke-linecap="round"/><polyline points="121.5,298.5 131.5,288.5 131.5,281.0 140.5,273.7 186.6,273.7 193.9,281.0 193.9,288.0" fill="none" stroke="#dc2a3a" stroke-width="1.9" stroke-linejoin="round" stroke-linecap="round"/><polyline points="151.0,244.0 161.5,231.0 226.5,231.0 237.2,241.5 237.2,272.0" fill="none" stroke="#dc2a3a" stroke-width="1.9" stroke-linejoin="round" stroke-linecap="round"/><polyline points="151.0,256.5 183.8,256.5 201.8,272.3 201.8,288.0" fill="none" stroke="#dc2a3a" stroke-width="1.9" stroke-linejoin="round" stroke-linecap="round"/><polyline points="191.5,245.0 191.5,250.0 210.0,268.0 210.0,288.0" fill="none" stroke="#dc2a3a" stroke-width="1.9" stroke-linejoin="round" stroke-linecap="round"/><polyline points="259.0,272.5 282.6,295.8 282.6,312.0" fill="none" stroke="#dc2a3a" stroke-width="1.9" stroke-linejoin="round" stroke-linecap="round"/><polyline points="237.2,284.0 237.2,345.7 229.3,352.6 215.5,352.6 210.0,345.0" fill="none" stroke="#dc2a3a" stroke-width="1.9" stroke-linejoin="round" stroke-linecap="round"/><polyline points="283.6,324.0 283.6,344.7 266.8,360.5 209.6,360.5 202.0,352.6 202.0,345.0" fill="none" stroke="#dc2a3a" stroke-width="1.9" stroke-linejoin="round" stroke-linecap="round"/><polyline points="193.9,345.0 193.9,355.5 205.7,368.4 258.9,368.4 260.5,375.0" fill="none" stroke="#dc2a3a" stroke-width="1.9" stroke-linejoin="round" stroke-linecap="round"/><polyline points="185.9,345.0 185.9,364.4 199.7,378.2 219.5,378.2" fill="none" stroke="#dc2a3a" stroke-width="1.9" stroke-linejoin="round" stroke-linecap="round"/><polyline points="177.8,345.0 177.8,360.0 179.5,365.0 179.5,378.0" fill="none" stroke="#dc2a3a" stroke-width="1.9" stroke-linejoin="round" stroke-linecap="round"/><polyline points="169.8,345.0 169.8,361.4 156.8,378.2 138.7,378.2" fill="none" stroke="#dc2a3a" stroke-width="1.9" stroke-linejoin="round" stroke-linecap="round"/><polyline points="161.7,345.0 161.7,355.5 154.9,361.4 115.4,361.4 101.6,374.3 99.2,378.0" fill="none" stroke="#dc2a3a" stroke-width="1.9" stroke-linejoin="round" stroke-linecap="round"/><polyline points="99.2,422.6 260.5,422.6" fill="none" stroke="#dc2a3a" stroke-width="1.9" stroke-linejoin="round" stroke-linecap="round"/><polyline points="166.3,284.0 166.3,310.5" fill="none" stroke="#dc2a3a" stroke-width="1.9" stroke-linejoin="round" stroke-linecap="round"/><polyline points="99.2,383.0 99.2,417.0" fill="none" stroke="#dc2a3a" stroke-width="1.9" stroke-linejoin="round" stroke-linecap="round"/><polyline points="138.7,383.0 138.7,417.0" fill="none" stroke="#dc2a3a" stroke-width="1.9" stroke-linejoin="round" stroke-linecap="round"/><polyline points="179.5,383.0 179.5,417.0" fill="none" stroke="#dc2a3a" stroke-width="1.9" stroke-linejoin="round" stroke-linecap="round"/><polyline points="219.5,383.0 219.5,417.0" fill="none" stroke="#dc2a3a" stroke-width="1.9" stroke-linejoin="round" stroke-linecap="round"/><polyline points="260.5,383.0 260.5,417.0" fill="none" stroke="#dc2a3a" stroke-width="1.9" stroke-linejoin="round" stroke-linecap="round"/><rect x="94.3" y="279.8" width="32.4" height="21.2" fill="none" stroke="#8c36a6" stroke-width="1"/><rect x="94.7" y="283.3" width="31.6" height="4.3" fill="#d42a3c"/><rect x="94.7" y="295.8" width="31.6" height="3.8" fill="#d42a3c"/><rect x="94.7" y="283.3" width="7" height="4.3" fill="#ee3444"/><rect x="94.7" y="295.8" width="7" height="3.8" fill="#ee3444"/><rect x="119.3" y="283.3" width="7" height="4.3" fill="#ee3444"/><rect x="119.3" y="295.8" width="7" height="3.8" fill="#ee3444"/><path d="M101.0 282.1H120.0M101.0 300.40000000000003H120.0M100.7 288.2V295.0M120.3 288.2V295.0" stroke="#e9e2a8" stroke-width=".9" fill="none"/><circle cx="110.5" cy="291.8" r="5.4" fill="#001023" stroke="#8c8c94" stroke-width=".9"/><text x="110.5" y="293.1" font-size="3.8" fill="#b0b0b8" text-anchor="middle" font-family="Liberation Sans">SW1</text><text x="110.5" y="279.5" font-size="4.4" fill="#e9e2a8" text-anchor="middle" font-family="Liberation Sans">SW1</text><text x="110.5" y="304.2" font-size="4.3" fill="#b4b4bc" text-anchor="middle" font-family="Liberation Sans" textLength="50" lengthAdjust="spacingAndGlyphs">SW_Tactile_Ptzmnmn_Cmms</text><rect x="98.5" y="301.40000000000003" width="24" height="1.6" fill="#a050a8" opacity=".55"/><rect x="122.10000000000001" y="238.4" width="32.4" height="21.2" fill="none" stroke="#8c36a6" stroke-width="1"/><rect x="122.50000000000001" y="241.9" width="31.6" height="4.3" fill="#d42a3c"/><rect x="122.50000000000001" y="254.4" width="31.6" height="3.8" fill="#d42a3c"/><rect x="122.50000000000001" y="241.9" width="7" height="4.3" fill="#ee3444"/><rect x="122.50000000000001" y="254.4" width="7" height="3.8" fill="#ee3444"/><rect x="147.10000000000002" y="241.9" width="7" height="4.3" fill="#ee3444"/><rect x="147.10000000000002" y="254.4" width="7" height="3.8" fill="#ee3444"/><path d="M128.8 240.70000000000002H147.8M128.8 259.0H147.8M128.5 246.8V253.6M148.10000000000002 246.8V253.6" stroke="#e9e2a8" stroke-width=".9" fill="none"/><circle cx="138.3" cy="250.4" r="5.4" fill="#001023" stroke="#8c8c94" stroke-width=".9"/><text x="138.3" y="251.70000000000002" font-size="3.8" fill="#b0b0b8" text-anchor="middle" font-family="Liberation Sans">SW2</text><text x="138.3" y="238.1" font-size="4.4" fill="#e9e2a8" text-anchor="middle" font-family="Liberation Sans">SW2</text><text x="138.3" y="262.8" font-size="4.3" fill="#b4b4bc" text-anchor="middle" font-family="Liberation Sans" textLength="50" lengthAdjust="spacingAndGlyphs">SW_Tactile_Ptzmnmn_Cmms</text><rect x="126.30000000000001" y="260.0" width="24" height="1.6" fill="#a050a8" opacity=".55"/><rect x="186.10000000000002" y="224.7" width="32.4" height="21.2" fill="none" stroke="#8c36a6" stroke-width="1"/><rect x="186.5" y="228.2" width="31.6" height="4.3" fill="#d42a3c"/><rect x="186.5" y="240.7" width="31.6" height="3.8" fill="#d42a3c"/><rect x="186.5" y="228.2" width="7" height="4.3" fill="#ee3444"/><rect x="186.5" y="240.7" width="7" height="3.8" fill="#ee3444"/><rect x="211.10000000000002" y="228.2" width="7" height="4.3" fill="#ee3444"/><rect x="211.10000000000002" y="240.7" width="7" height="3.8" fill="#ee3444"/><path d="M192.8 227.0H211.8M192.8 245.29999999999998H211.8M192.5 233.1V239.89999999999998M212.10000000000002 233.1V239.89999999999998" stroke="#e9e2a8" stroke-width=".9" fill="none"/><circle cx="202.3" cy="236.7" r="5.4" fill="#001023" stroke="#8c8c94" stroke-width=".9"/><text x="202.3" y="238.0" font-size="3.8" fill="#b0b0b8" text-anchor="middle" font-family="Liberation Sans">SW3</text><text x="202.3" y="224.39999999999998" font-size="4.4" fill="#e9e2a8" text-anchor="middle" font-family="Liberation Sans">SW3</text><text x="202.3" y="249.1" font-size="4.3" fill="#b4b4bc" text-anchor="middle" font-family="Liberation Sans" textLength="50" lengthAdjust="spacingAndGlyphs">SW_Tactile_Ptzmnmn_Cmms</text><rect x="190.3" y="246.29999999999998" width="24" height="1.6" fill="#a050a8" opacity=".55"/><rect x="231.8" y="266.4" width="32.4" height="21.2" fill="none" stroke="#8c36a6" stroke-width="1"/><rect x="232.2" y="269.9" width="31.6" height="4.3" fill="#d42a3c"/><rect x="232.2" y="282.4" width="31.6" height="3.8" fill="#d42a3c"/><rect x="232.2" y="269.9" width="7" height="4.3" fill="#ee3444"/><rect x="232.2" y="282.4" width="7" height="3.8" fill="#ee3444"/><rect x="256.8" y="269.9" width="7" height="4.3" fill="#ee3444"/><rect x="256.8" y="282.4" width="7" height="3.8" fill="#ee3444"/><path d="M238.5 268.7H257.5M238.5 287.0H257.5M238.2 274.79999999999995V281.59999999999997M257.8 274.79999999999995V281.59999999999997" stroke="#e9e2a8" stroke-width=".9" fill="none"/><circle cx="248" cy="278.4" r="5.4" fill="#001023" stroke="#8c8c94" stroke-width=".9"/><text x="248" y="279.7" font-size="3.8" fill="#b0b0b8" text-anchor="middle" font-family="Liberation Sans">SW4</text><text x="248" y="266.09999999999997" font-size="4.4" fill="#e9e2a8" text-anchor="middle" font-family="Liberation Sans">SW4</text><text x="248" y="290.79999999999995" font-size="4.3" fill="#b4b4bc" text-anchor="middle" font-family="Liberation Sans" textLength="50" lengthAdjust="spacingAndGlyphs">SW_Tactile_Ptzmnmn_Cmms</text><rect x="236" y="288.0" width="24" height="1.6" fill="#a050a8" opacity=".55"/><rect x="256.1" y="305.5" width="32.4" height="21.2" fill="none" stroke="#8c36a6" stroke-width="1"/><rect x="256.5" y="309.0" width="31.6" height="4.3" fill="#d42a3c"/><rect x="256.5" y="321.5" width="31.6" height="3.8" fill="#d42a3c"/><rect x="256.5" y="309.0" width="7" height="4.3" fill="#ee3444"/><rect x="256.5" y="321.5" width="7" height="3.8" fill="#ee3444"/><rect x="281.1" y="309.0" width="7" height="4.3" fill="#ee3444"/><rect x="281.1" y="321.5" width="7" height="3.8" fill="#ee3444"/><path d="M262.8 307.8H281.8M262.8 326.1H281.8M262.5 313.9V320.7M282.1 313.9V320.7" stroke="#e9e2a8" stroke-width=".9" fill="none"/><circle cx="272.3" cy="317.5" r="5.4" fill="#001023" stroke="#8c8c94" stroke-width=".9"/><text x="272.3" y="318.8" font-size="3.8" fill="#b0b0b8" text-anchor="middle" font-family="Liberation Sans">SW5</text><text x="272.3" y="305.2" font-size="4.4" fill="#e9e2a8" text-anchor="middle" font-family="Liberation Sans">SW5</text><text x="272.3" y="329.9" font-size="4.3" fill="#b4b4bc" text-anchor="middle" font-family="Liberation Sans" textLength="50" lengthAdjust="spacingAndGlyphs">SW_Tactile_Ptzmnmn_Cmms</text><rect x="260.3" y="327.1" width="24" height="1.6" fill="#a050a8" opacity=".55"/><rect x="146.7" y="282.3" width="73.7" height="66.7" fill="none" stroke="#8c36a6" stroke-width="1"/><rect x="153" y="287.5" width="65.6" height="55.8" rx="3" fill="none" stroke="#e9e2a8" stroke-width=".9"/><rect x="147.9" y="301.3" width="5.1" height="28.2" fill="none" stroke="#c9c9c4" stroke-width=".8"/><rect x="159.29999999999998" y="282.3" width="4.8" height="10.9" rx="1.5" fill="#e5323e"/><circle cx="161.7" cy="290.3" r="2.1" fill="none" stroke="#f0b850" stroke-width=".7"/><rect x="159.29999999999998" y="337.5" width="4.8" height="10.9" rx="1.5" fill="#e5323e"/><circle cx="161.7" cy="340" r="2.1" fill="none" stroke="#f0b850" stroke-width=".7"/><rect x="167.29999999999998" y="282.3" width="4.8" height="10.9" rx="1.5" fill="#e5323e"/><circle cx="169.7" cy="290.3" r="2.1" fill="none" stroke="#f0b850" stroke-width=".7"/><rect x="167.29999999999998" y="337.5" width="4.8" height="10.9" rx="1.5" fill="#e5323e"/><circle cx="169.7" cy="340" r="2.1" fill="none" stroke="#f0b850" stroke-width=".7"/><rect x="175.4" y="282.3" width="4.8" height="10.9" rx="1.5" fill="#e5323e"/><circle cx="177.8" cy="290.3" r="2.1" fill="none" stroke="#f0b850" stroke-width=".7"/><rect x="175.4" y="337.5" width="4.8" height="10.9" rx="1.5" fill="#e5323e"/><circle cx="177.8" cy="340" r="2.1" fill="none" stroke="#f0b850" stroke-width=".7"/><rect x="183.5" y="282.3" width="4.8" height="10.9" rx="1.5" fill="#e5323e"/><circle cx="185.9" cy="290.3" r="2.1" fill="none" stroke="#f0b850" stroke-width=".7"/><rect x="183.5" y="337.5" width="4.8" height="10.9" rx="1.5" fill="#e5323e"/><circle cx="185.9" cy="340" r="2.1" fill="none" stroke="#f0b850" stroke-width=".7"/><rect x="191.5" y="282.3" width="4.8" height="10.9" rx="1.5" fill="#e5323e"/><circle cx="193.9" cy="290.3" r="2.1" fill="none" stroke="#f0b850" stroke-width=".7"/><rect x="191.5" y="337.5" width="4.8" height="10.9" rx="1.5" fill="#e5323e"/><circle cx="193.9" cy="340" r="2.1" fill="none" stroke="#f0b850" stroke-width=".7"/><rect x="199.6" y="282.3" width="4.8" height="10.9" rx="1.5" fill="#e5323e"/><circle cx="202" cy="290.3" r="2.1" fill="none" stroke="#f0b850" stroke-width=".7"/><rect x="199.6" y="337.5" width="4.8" height="10.9" rx="1.5" fill="#e5323e"/><circle cx="202" cy="340" r="2.1" fill="none" stroke="#f0b850" stroke-width=".7"/><rect x="207.6" y="282.3" width="4.8" height="10.9" rx="1.5" fill="#e5323e"/><circle cx="210" cy="290.3" r="2.1" fill="none" stroke="#f0b850" stroke-width=".7"/><rect x="207.6" y="337.5" width="4.8" height="10.9" rx="1.5" fill="#e5323e"/><circle cx="210" cy="340" r="2.1" fill="none" stroke="#f0b850" stroke-width=".7"/><rect x="183" y="302.4" width="9.8" height="9.2" fill="#e5323e"/><text x="187.9" y="309" font-size="4" fill="#f2d0a0" text-anchor="middle" font-family="Liberation Sans">D2</text><circle cx="158.2" cy="310.5" r="1.8" fill="#e5323e"/><circle cx="158.2" cy="318.5" r="1.8" fill="#e5323e"/><circle cx="166.3" cy="310.5" r="1.8" fill="#e5323e"/><circle cx="166.3" cy="318.5" r="1.8" fill="#e5323e"/><circle cx="174.3" cy="310.5" r="1.8" fill="#e5323e"/><circle cx="174.3" cy="318.5" r="1.8" fill="#e5323e"/><rect x="176" y="326" width="5.2" height="7.5" fill="#e5323e"/><rect x="183" y="326" width="5.2" height="7.5" fill="#e5323e"/><text x="164" y="305.5" font-size="3.6" fill="#f0e070" font-weight="bold" text-anchor="middle" font-family="Liberation Sans">D1SKM</text><text x="170" y="308.2" font-size="3.2" fill="#f0e070" font-weight="bold" text-anchor="middle" font-family="Liberation Sans">R2D</text><text x="180.5" y="305.5" font-size="3.6" fill="#f0e070" font-weight="bold" text-anchor="middle" font-family="Liberation Sans">1D2R</text><text x="164" y="315.4" font-size="3.6" fill="#f0e070" font-weight="bold" text-anchor="middle" font-family="Liberation Sans">D1SK</text><text x="172" y="315.4" font-size="3.2" fill="#f0e070" font-weight="bold" text-anchor="middle" font-family="Liberation Sans">R1</text><text x="180" y="315.4" font-size="3.6" fill="#f0e070" font-weight="bold" text-anchor="middle" font-family="Liberation Sans">D2SR</text><text x="187" y="299.7" font-size="3.4" fill="#f0e070" font-weight="bold" text-anchor="middle" font-family="Liberation Sans">TWAMDNM</text><text x="183" y="323.8" font-size="3.6" fill="#f0e070" font-weight="bold" text-anchor="middle" font-family="Liberation Sans">2RB</text><text transform="translate(196,313) rotate(-90)" font-size="3.4" fill="#e9e2a8" text-anchor="middle" font-family="Liberation Sans">R1</text><text transform="translate(203,313) rotate(-90)" font-size="3.4" fill="#e9e2a8" text-anchor="middle" font-family="Liberation Sans">R2</text><text transform="translate(216.8,312) rotate(90)" font-size="3" fill="#e9e2a8" text-anchor="middle" font-family="Liberation Sans" opacity=".6">-----------------</text><rect x="95.8" y="373.7" width="6.8" height="6.6" rx="1.5" fill="#a02a8a" opacity=".85"/><rect x="96.8" y="374.7" width="4.8" height="4.6" fill="#e5323e"/><rect x="95.8" y="383.8" width="6.8" height="6.6" rx="1.5" fill="#a02a8a" opacity=".85"/><rect x="96.8" y="384.8" width="4.8" height="4.6" fill="#e5323e"/><path d="M95.60000000000001 380.0V384.0M102.8 380.0V384.0" stroke="#d8d8d8" stroke-width=".8"/><rect x="98.0" y="380.7" width="2.4" height="2.6" fill="#c8c8c8" opacity=".8"/><text transform="translate(93.2,382.5) rotate(-90)" font-size="3.4" fill="#c8c8c8" text-anchor="middle" font-family="Liberation Sans">D1D</text><text transform="translate(105.8,382.0) rotate(-90)" font-size="3.4" fill="#e8e0a0" text-anchor="middle" font-family="Liberation Sans">D1</text><rect x="95.8" y="407.2" width="6.8" height="6.6" rx="1.5" fill="#a02a8a" opacity=".85"/><rect x="96.8" y="408.2" width="4.8" height="4.6" fill="#e5323e"/><rect x="95.8" y="417.3" width="6.8" height="6.6" rx="1.5" fill="#a02a8a" opacity=".85"/><rect x="96.8" y="418.3" width="4.8" height="4.6" fill="#e5323e"/><path d="M95.60000000000001 413.5V417.5M102.8 413.5V417.5" stroke="#d8d8d8" stroke-width=".8"/><rect x="98.0" y="414.2" width="2.4" height="2.6" fill="#c8c8c8" opacity=".8"/><text transform="translate(93.2,416) rotate(-90)" font-size="3.4" fill="#c8c8c8" text-anchor="middle" font-family="Liberation Sans">D1D</text><text transform="translate(105.8,415.5) rotate(-90)" font-size="3.4" fill="#e8e0a0" text-anchor="middle" font-family="Liberation Sans">D1</text><rect x="135.29999999999998" y="373.7" width="6.8" height="6.6" rx="1.5" fill="#a02a8a" opacity=".85"/><rect x="136.29999999999998" y="374.7" width="4.8" height="4.6" fill="#e5323e"/><rect x="135.29999999999998" y="383.8" width="6.8" height="6.6" rx="1.5" fill="#a02a8a" opacity=".85"/><rect x="136.29999999999998" y="384.8" width="4.8" height="4.6" fill="#e5323e"/><path d="M135.1 380.0V384.0M142.29999999999998 380.0V384.0" stroke="#d8d8d8" stroke-width=".8"/><rect x="137.5" y="380.7" width="2.4" height="2.6" fill="#c8c8c8" opacity=".8"/><text transform="translate(132.7,382.5) rotate(-90)" font-size="3.4" fill="#c8c8c8" text-anchor="middle" font-family="Liberation Sans">D1D</text><text transform="translate(145.29999999999998,382.0) rotate(-90)" font-size="3.4" fill="#e8e0a0" text-anchor="middle" font-family="Liberation Sans">D1</text><rect x="135.29999999999998" y="407.2" width="6.8" height="6.6" rx="1.5" fill="#a02a8a" opacity=".85"/><rect x="136.29999999999998" y="408.2" width="4.8" height="4.6" fill="#e5323e"/><rect x="135.29999999999998" y="417.3" width="6.8" height="6.6" rx="1.5" fill="#a02a8a" opacity=".85"/><rect x="136.29999999999998" y="418.3" width="4.8" height="4.6" fill="#e5323e"/><path d="M135.1 413.5V417.5M142.29999999999998 413.5V417.5" stroke="#d8d8d8" stroke-width=".8"/><rect x="137.5" y="414.2" width="2.4" height="2.6" fill="#c8c8c8" opacity=".8"/><text transform="translate(132.7,416) rotate(-90)" font-size="3.4" fill="#c8c8c8" text-anchor="middle" font-family="Liberation Sans">D1D</text><text transform="translate(145.29999999999998,415.5) rotate(-90)" font-size="3.4" fill="#e8e0a0" text-anchor="middle" font-family="Liberation Sans">D1</text><rect x="176.1" y="373.7" width="6.8" height="6.6" rx="1.5" fill="#a02a8a" opacity=".85"/><rect x="177.1" y="374.7" width="4.8" height="4.6" fill="#e5323e"/><rect x="176.1" y="383.8" width="6.8" height="6.6" rx="1.5" fill="#a02a8a" opacity=".85"/><rect x="177.1" y="384.8" width="4.8" height="4.6" fill="#e5323e"/><path d="M175.9 380.0V384.0M183.1 380.0V384.0" stroke="#d8d8d8" stroke-width=".8"/><rect x="178.3" y="380.7" width="2.4" height="2.6" fill="#c8c8c8" opacity=".8"/><text transform="translate(173.5,382.5) rotate(-90)" font-size="3.4" fill="#c8c8c8" text-anchor="middle" font-family="Liberation Sans">D1D</text><text transform="translate(186.1,382.0) rotate(-90)" font-size="3.4" fill="#e8e0a0" text-anchor="middle" font-family="Liberation Sans">D1</text><rect x="176.1" y="407.2" width="6.8" height="6.6" rx="1.5" fill="#a02a8a" opacity=".85"/><rect x="177.1" y="408.2" width="4.8" height="4.6" fill="#e5323e"/><rect x="176.1" y="417.3" width="6.8" height="6.6" rx="1.5" fill="#a02a8a" opacity=".85"/><rect x="177.1" y="418.3" width="4.8" height="4.6" fill="#e5323e"/><path d="M175.9 413.5V417.5M183.1 413.5V417.5" stroke="#d8d8d8" stroke-width=".8"/><rect x="178.3" y="414.2" width="2.4" height="2.6" fill="#c8c8c8" opacity=".8"/><text transform="translate(173.5,416) rotate(-90)" font-size="3.4" fill="#c8c8c8" text-anchor="middle" font-family="Liberation Sans">D1D</text><text transform="translate(186.1,415.5) rotate(-90)" font-size="3.4" fill="#e8e0a0" text-anchor="middle" font-family="Liberation Sans">D1</text><rect x="216.1" y="373.7" width="6.8" height="6.6" rx="1.5" fill="#a02a8a" opacity=".85"/><rect x="217.1" y="374.7" width="4.8" height="4.6" fill="#e5323e"/><rect x="216.1" y="383.8" width="6.8" height="6.6" rx="1.5" fill="#a02a8a" opacity=".85"/><rect x="217.1" y="384.8" width="4.8" height="4.6" fill="#e5323e"/><path d="M215.9 380.0V384.0M223.1 380.0V384.0" stroke="#d8d8d8" stroke-width=".8"/><rect x="218.3" y="380.7" width="2.4" height="2.6" fill="#c8c8c8" opacity=".8"/><text transform="translate(213.5,382.5) rotate(-90)" font-size="3.4" fill="#c8c8c8" text-anchor="middle" font-family="Liberation Sans">D1D</text><text transform="translate(226.1,382.0) rotate(-90)" font-size="3.4" fill="#e8e0a0" text-anchor="middle" font-family="Liberation Sans">D1</text><rect x="216.1" y="407.2" width="6.8" height="6.6" rx="1.5" fill="#a02a8a" opacity=".85"/><rect x="217.1" y="408.2" width="4.8" height="4.6" fill="#e5323e"/><rect x="216.1" y="417.3" width="6.8" height="6.6" rx="1.5" fill="#a02a8a" opacity=".85"/><rect x="217.1" y="418.3" width="4.8" height="4.6" fill="#e5323e"/><path d="M215.9 413.5V417.5M223.1 413.5V417.5" stroke="#d8d8d8" stroke-width=".8"/><rect x="218.3" y="414.2" width="2.4" height="2.6" fill="#c8c8c8" opacity=".8"/><text transform="translate(213.5,416) rotate(-90)" font-size="3.4" fill="#c8c8c8" text-anchor="middle" font-family="Liberation Sans">D1D</text><text transform="translate(226.1,415.5) rotate(-90)" font-size="3.4" fill="#e8e0a0" text-anchor="middle" font-family="Liberation Sans">D1</text><rect x="257.1" y="373.7" width="6.8" height="6.6" rx="1.5" fill="#a02a8a" opacity=".85"/><rect x="258.1" y="374.7" width="4.8" height="4.6" fill="#e5323e"/><rect x="257.1" y="383.8" width="6.8" height="6.6" rx="1.5" fill="#a02a8a" opacity=".85"/><rect x="258.1" y="384.8" width="4.8" height="4.6" fill="#e5323e"/><path d="M256.9 380.0V384.0M264.1 380.0V384.0" stroke="#d8d8d8" stroke-width=".8"/><rect x="259.3" y="380.7" width="2.4" height="2.6" fill="#c8c8c8" opacity=".8"/><text transform="translate(254.5,382.5) rotate(-90)" font-size="3.4" fill="#c8c8c8" text-anchor="middle" font-family="Liberation Sans">D1D</text><text transform="translate(267.1,382.0) rotate(-90)" font-size="3.4" fill="#e8e0a0" text-anchor="middle" font-family="Liberation Sans">D1</text><rect x="257.1" y="407.2" width="6.8" height="6.6" rx="1.5" fill="#a02a8a" opacity=".85"/><rect x="258.1" y="408.2" width="4.8" height="4.6" fill="#e5323e"/><rect x="257.1" y="417.3" width="6.8" height="6.6" rx="1.5" fill="#a02a8a" opacity=".85"/><rect x="258.1" y="418.3" width="4.8" height="4.6" fill="#e5323e"/><path d="M256.9 413.5V417.5M264.1 413.5V417.5" stroke="#d8d8d8" stroke-width=".8"/><rect x="259.3" y="414.2" width="2.4" height="2.6" fill="#c8c8c8" opacity=".8"/><text transform="translate(254.5,416) rotate(-90)" font-size="3.4" fill="#c8c8c8" text-anchor="middle" font-family="Liberation Sans">D1D</text><text transform="translate(267.1,415.5) rotate(-90)" font-size="3.4" fill="#e8e0a0" text-anchor="middle" font-family="Liberation Sans">D1</text><text transform="translate(287.3,403.5) rotate(-90)" font-size="12.6" fill="#d6ce9a" text-anchor="middle" font-family="Liberation Sans" letter-spacing="1.3">Emily</text></g></svg><div class="a" style="left:825px;top:67px;width:30px;height:520px;background:#ececec"></div><div class="a" style="left:854.5px;top:67px;width:1px;height:520px;background:#dcdcdc"></div><div class="a" style="left:828.5px;top:70px;width:20px;height:20px;background:#dce7f4;border-radius:2px"></div><svg class="a" style="left:830.5px;top:72px" width="16" height="16" viewBox="0 0 16 16"><path d="M5 2.5v10.5l2.5-2.3 1.8 4 1.6-.7-1.8-3.9h3.3z" fill="#333"/></svg><svg class="a" style="left:830.5px;top:95px" width="16" height="16" viewBox="0 0 16 16"><path d="M1 1l5.5 5.5M15 1L9.5 6.5M1 15l5.5-5.5M15 15l-5.5-5.5" stroke="#777" stroke-width="1"/><rect x="6" y="6" width="4" height="4" fill="#fff" stroke="#777" stroke-width=".8"/></svg><div class="a" style="left:832px;top:116.5px;width:14px;height:1px;background:#d6d6d6"></div><svg class="a" style="left:830.5px;top:123px" width="16" height="16" viewBox="0 0 16 16"><g fill="#2d7bd0"><rect x="0.5" y="0" width="4.4" height="4.6" rx=".8"/><rect x="5.6" y="0" width="4.4" height="4.6" rx=".8"/><rect x="10.7" y="0" width="4.4" height="4.6" rx=".8"/><rect x="0.5" y="10" width="4.4" height="4.6" rx=".8"/><rect x="5.6" y="10" width="4.4" height="4.6" rx=".8"/><rect x="10.7" y="10" width="4.4" height="4.6" rx=".8"/></g><path d="M15.5 1.5q1.2 0 1.2 3v6q0 3-1.2 3M0 1.5q-1.2 0-1.2 3v6q0 3 1.2 3" fill="none" stroke="#aaa" stroke-width=".6"/></svg><svg class="a" style="left:830.5px;top:146px" width="16" height="16" viewBox="0 0 16 16"><path d="M0.5 14.5l5-5.5h4l5.5-8" fill="none" stroke="#2d7bd0" stroke-width="1.2"/><path d="M16 11v5h-5z" fill="#111"/></svg><svg class="a" style="left:830.5px;top:169.5px" width="16" height="16" viewBox="0 0 16 16"><path d="M0.5 9.5q1.5 0 2-2t2 0 1 3 2 .5 1-4 2-3.5 1.5 3 1.5 3.5 2-.5" fill="none" stroke="#2d7bd0" stroke-width="1.2"/><path d="M16 11v5h-5z" fill="#111"/></svg><svg class="a" style="left:830.5px;top:190px" width="16" height="16" viewBox="0 0 16 16"><circle cx="8" cy="8" r="3.6" fill="none" stroke="#f0922a" stroke-width="2.6"/></svg><svg class="a" style="left:830.5px;top:212px" width="16" height="16" viewBox="0 0 16 16"><path d="M1 15.5V8.5h5.5V1.5h8.5v14z" fill="#2d7bd0"/><circle cx="11.5" cy="8.5" r="2.3" fill="#fff"/><rect x="11.5" y="7.5" width="4" height="2" fill="#fff"/></svg><svg class="a" style="left:830.5px;top:234.5px" width="16" height="16" viewBox="0 0 16 16"><rect x="1.5" y="1.5" width="13" height="13" fill="#fff"/><path d="M1.5 5.5l4-4M1.5 9.5l8-8M1.5 13.5l12-12M4.5 14.5l10-10M8.5 14.5l6-6M12.5 14.5l2-2" stroke="#333" stroke-width="1.5"/></svg><div class="a" style="left:832px;top:254px;width:14px;height:1px;background:#d6d6d6"></div><svg class="a" style="left:830.5px;top:262.5px" width="16" height="16" viewBox="0 0 16 16"><path d="M2 14L14 2" stroke="#333" stroke-width="1.3"/></svg><svg class="a" style="left:830.5px;top:285px" width="16" height="16" viewBox="0 0 16 16"><path d="M2 15V11Q2 3 14 2" fill="none" stroke="#333" stroke-width="1.3"/></svg><svg class="a" style="left:830.5px;top:307px" width="16" height="16" viewBox="0 0 16 16"><rect x="1.5" y="2.5" width="13" height="11" fill="#c4c4c4" stroke="#444" stroke-width="1.2"/></svg><svg class="a" style="left:830.5px;top:329.5px" width="16" height="16" viewBox="0 0 16 16"><circle cx="8" cy="8" r="6.5" fill="#c4c4c4" stroke="#444" stroke-width="1.2"/></svg><svg class="a" style="left:830.5px;top:352px" width="16" height="16" viewBox="0 0 16 16"><path d="M1.5 2L15 5.5l-2.5 9-10.5 1L6 9z" fill="#c4c4c4" stroke="#444" stroke-width="1.2" stroke-linejoin="round"/></svg><svg class="a" style="left:830.5px;top:373.5px" width="16" height="16" viewBox="0 0 16 16"><path d="M1 9c2-3 3 2 5-1s2-4 3-1 1 3 3 0 2-3 3-2" fill="none" stroke="#2d5aa0" stroke-width="1.1"/><circle cx="2" cy="8" r=".9" fill="#2d5aa0"/><circle cx="14" cy="6" r=".9" fill="#2d5aa0"/></svg><svg class="a" style="left:830.5px;top:395.5px" width="16" height="16" viewBox="0 0 16 16"><rect x="1" y="1" width="14" height="14" rx="1" fill="#333"/><rect x="2.5" y="2.5" width="11" height="11" fill="#fff"/><path d="M2.5 13.5l4-5 3 3 2-2 2 2v2z" fill="#333"/><circle cx="10.5" cy="5.5" r="1.5" fill="#333"/></svg><svg class="a" style="left:830.5px;top:418.5px" width="16" height="16" viewBox="0 0 16 16"><path d="M2 2h12M8 2v13" stroke="#333" stroke-width="2"/></svg><svg class="a" style="left:830.5px;top:440.5px" width="16" height="16" viewBox="0 0 16 16"><rect x="1.5" y="2.5" width="13" height="11" fill="#fff" stroke="#444" stroke-width="1.1"/><path d="M4 6h8M4 8.5h8M4 11h6" stroke="#444" stroke-width="1"/></svg><svg class="a" style="left:830.5px;top:462.5px" width="16" height="16" viewBox="0 0 16 16"><rect x="1" y="1.5" width="14" height="13" fill="#fff" stroke="#444" stroke-width="1"/><path d="M1 5.5h14M1 8.5h14M1 11.5h14M5.7 1.5v13M10.3 1.5v13" stroke="#666" stroke-width=".8"/></svg><svg class="a" style="left:830.5px;top:486px" width="16" height="16" viewBox="0 0 16 16"><circle cx="2.5" cy="3" r="1.6" fill="#2d7bd0"/><circle cx="12" cy="13" r="1.6" fill="#2d7bd0"/><path d="M2.5 3h10v10" fill="none" stroke="#2d7bd0" stroke-width=".8"/><path d="M12.5 4v7" stroke="#444" stroke-dasharray="1 1" stroke-width=".7"/><path d="M16 12.5v3.5h-3.5z" fill="#111"/></svg><svg class="a" style="left:830.5px;top:509px" width="16" height="16" viewBox="0 0 16 16"><path d="M2 1v11l2.5-2.3 1.8 4 1.6-.7-1.8-3.9h3.3z" fill="#444"/><circle cx="11" cy="11" r="4.5" fill="#d61e33"/><path d="M9 9l4 4M13 9l-4 4" stroke="#fff" stroke-width="1.4"/></svg><div class="a" style="left:832px;top:529px;width:14px;height:1px;background:#d6d6d6"></div><svg class="a" style="left:830.5px;top:537px" width="16" height="16" viewBox="0 0 16 16"><circle cx="2" cy="2" r="1" fill="#333"/><circle cx="2" cy="6" r="1" fill="#333"/><circle cx="2" cy="10" r="1" fill="#333"/><circle cx="2" cy="14" r="1" fill="#333"/><circle cx="6" cy="2" r="1" fill="#333"/><circle cx="6" cy="6" r="1" fill="#333"/><circle cx="6" cy="10" r="1" fill="#333"/><circle cx="6" cy="14" r="1" fill="#333"/><circle cx="10" cy="2" r="1" fill="#333"/><circle cx="10" cy="6" r="1" fill="#333"/><circle cx="10" cy="10" r="1" fill="#333"/><circle cx="10" cy="14" r="1" fill="#333"/><circle cx="14" cy="2" r="1" fill="#333"/><circle cx="14" cy="6" r="1" fill="#333"/><circle cx="14" cy="10" r="1" fill="#333"/><circle cx="14" cy="14" r="1" fill="#333"/><path d="M6 3v10M2 10h10" stroke="#2d7bd0" stroke-width="1.4"/><path d="M16 12.5v3.5h-3.5z" fill="#111"/></svg><svg class="a" style="left:830.5px;top:558.5px" width="16" height="16" viewBox="0 0 16 16"><path d="M1.5 11.5L11 2l3.5 3.5L5 15z" fill="#fff" stroke="#222" stroke-width="1.4" stroke-linejoin="round"/><path d="M5 8l1.5 1.5M7 6l1.5 1.5M9 4l1.5 1.5" stroke="#222" stroke-width=".8"/></svg><div class="a" style="left:855.5px;top:67px;width:144.5px;height:520px;background:#ececec"></div><div class="a" style="left:855.5px;top:67px;width:144.5px;height:11px;background:#cbcbcb"></div><div class="a" style="left:857.5px;top:67px;font-size:8px;line-height:11px;color:#3a3a3a">Appearance</div><div class="a" style="left:855.5px;top:78px;width:144.5px;height:340px;background:#e9e9e9"></div><div class="a" style="left:876px;top:87.3px;width:102px;height:15.5px;background:#e0e0e0;border-radius:4px"></div><div class="a" style="left:878.5px;top:88.3px;width:32.5px;height:13.5px;background:#fff;border-radius:3.5px;box-shadow:0 .5px 1px rgba(0,0,0,.12)"></div><div class="a" style="left:885.8px;top:88px;font-size:6.3px;line-height:11px;color:#3a3a3a">Layers</div><div class="a" style="left:919.7px;top:88px;font-size:6.3px;line-height:11px;color:#3a3a3a">Objects</div><div class="a" style="left:955.9px;top:88px;font-size:6.3px;line-height:11px;color:#3a3a3a">Nets</div><div class="ly" style="left:856px;top:106.5px;width:141.5px"><div class="sw" style="left:12.4px;background:#c83434"></div><div class="eye" style="left:27px"><svg width="12" height="10" viewBox="0 0 12 10"><ellipse cx="6" cy="5" rx="5.6" ry="4.6" fill="#3a3a3a"/><path d="M1.8 5Q6 1 10.2 5Q6 9 1.8 5z" fill="#fff"/><circle cx="6" cy="5" r="1.6" fill="#3a3a3a"/></svg></div><div class="t" style="left:42.3px">F.Cu</div></div><div class="ly" style="left:856px;top:119.0px;width:141.5px"><div class="sw" style="left:12.4px;background:#4d7fc4"></div><div class="eye" style="left:27px"><svg width="12" height="10" viewBox="0 0 12 10"><ellipse cx="6" cy="5" rx="5.6" ry="4.6" fill="#3a3a3a"/><path d="M1.8 5Q6 1 10.2 5Q6 9 1.8 5z" fill="#fff"/><circle cx="6" cy="5" r="1.6" fill="#3a3a3a"/></svg></div><div class="t" style="left:42.3px">B.Cu</div></div><div class="ly" style="left:856px;top:131.5px;width:141.5px"><div class="sw" style="left:12.4px;background:#84008a"></div><div class="eye" style="left:27px"><svg width="12" height="10" viewBox="0 0 12 10"><ellipse cx="6" cy="5" rx="5.6" ry="4.6" fill="#3a3a3a"/><path d="M1.8 5Q6 1 10.2 5Q6 9 1.8 5z" fill="#fff"/><circle cx="6" cy="5" r="1.6" fill="#3a3a3a"/></svg></div><div class="t" style="left:42.3px">F.Adhesive</div></div><div class="ly" style="left:856px;top:144.0px;width:141.5px"><div class="sw" style="left:12.4px;background:#000084"></div><div class="eye" style="left:27px"><svg width="12" height="10" viewBox="0 0 12 10"><ellipse cx="6" cy="5" rx="5.6" ry="4.6" fill="#3a3a3a"/><path d="M1.8 5Q6 1 10.2 5Q6 9 1.8 5z" fill="#fff"/><circle cx="6" cy="5" r="1.6" fill="#3a3a3a"/></svg></div><div class="t" style="left:42.3px">B.Adhesive</div></div><div class="ly" style="left:856px;top:156.5px;width:141.5px"><div class="sw" style="left:12.4px;background:#a89a94"></div><div class="eye" style="left:27px"><svg width="12" height="10" viewBox="0 0 12 10"><ellipse cx="6" cy="5" rx="5.6" ry="4.6" fill="#3a3a3a"/><path d="M1.8 5Q6 1 10.2 5Q6 9 1.8 5z" fill="#fff"/><circle cx="6" cy="5" r="1.6" fill="#3a3a3a"/></svg></div><div class="t" style="left:42.3px">F.Paste</div></div><div class="ly" style="left:856px;top:169.0px;width:141.5px"><div class="sw" style="left:12.4px;background:#00b2b2"></div><div class="eye" style="left:27px"><svg width="12" height="10" viewBox="0 0 12 10"><ellipse cx="6" cy="5" rx="5.6" ry="4.6" fill="#3a3a3a"/><path d="M1.8 5Q6 1 10.2 5Q6 9 1.8 5z" fill="#fff"/><circle cx="6" cy="5" r="1.6" fill="#3a3a3a"/></svg></div><div class="t" style="left:42.3px">B.Paste</div></div><div class="ly" style="left:856px;top:181.5px;background:#fafafa;width:141.5px"><div class="sw" style="left:12.4px;background:#f2eda1"></div><div class="eye" style="left:27px"><svg width="12" height="10" viewBox="0 0 12 10"><ellipse cx="6" cy="5" rx="5.6" ry="4.6" fill="#3a3a3a"/><path d="M1.8 5Q6 1 10.2 5Q6 9 1.8 5z" fill="#fff"/><circle cx="6" cy="5" r="1.6" fill="#3a3a3a"/></svg></div><div class="t" style="left:42.3px">F.Silkscreen</div></div><div class="ly" style="left:856px;top:194.0px;width:141.5px"><div class="sw" style="left:12.4px;background:#e8b2a7"></div><div class="eye" style="left:27px"><svg width="12" height="10" viewBox="0 0 12 10"><ellipse cx="6" cy="5" rx="5.6" ry="4.6" fill="#3a3a3a"/><path d="M1.8 5Q6 1 10.2 5Q6 9 1.8 5z" fill="#fff"/><circle cx="6" cy="5" r="1.6" fill="#3a3a3a"/></svg></div><div class="t" style="left:42.3px">B.Silkscreen</div></div><div class="ly" style="left:856px;top:206.5px;width:141.5px"><div class="sw" style="left:12.4px;background:#7a3b8f"></div><div class="eye" style="left:27px"><svg width="12" height="10" viewBox="0 0 12 10"><ellipse cx="6" cy="5" rx="5.6" ry="4.6" fill="#3a3a3a"/><path d="M1.8 5Q6 1 10.2 5Q6 9 1.8 5z" fill="#fff"/><circle cx="6" cy="5" r="1.6" fill="#3a3a3a"/></svg></div><div class="t" style="left:42.3px">F.Mask</div></div><div class="ly" style="left:856px;top:219.0px;width:141.5px"><div class="sw" style="left:12.4px;background:#006b58"></div><div class="eye" style="left:27px"><svg width="12" height="10" viewBox="0 0 12 10"><ellipse cx="6" cy="5" rx="5.6" ry="4.6" fill="#3a3a3a"/><path d="M1.8 5Q6 1 10.2 5Q6 9 1.8 5z" fill="#fff"/><circle cx="6" cy="5" r="1.6" fill="#3a3a3a"/></svg></div><div class="t" style="left:42.3px">B.Mask</div></div><div class="ly" style="left:856px;top:231.5px;width:141.5px"><div class="sw" style="left:12.4px;background:#c2c2c2"></div><div class="eye" style="left:27px"><svg width="12" height="10" viewBox="0 0 12 10"><ellipse cx="6" cy="5" rx="5.6" ry="4.6" fill="#3a3a3a"/><path d="M1.8 5Q6 1 10.2 5Q6 9 1.8 5z" fill="#fff"/><circle cx="6" cy="5" r="1.6" fill="#3a3a3a"/></svg></div><div class="t" style="left:42.3px">User.Drawings</div></div><div class="ly" style="left:856px;top:244.0px;width:141.5px"><div class="sw" style="left:12.4px;background:#598ad9"></div><div class="eye" style="left:27px"><svg width="12" height="10" viewBox="0 0 12 10"><ellipse cx="6" cy="5" rx="5.6" ry="4.6" fill="#3a3a3a"/><path d="M1.8 5Q6 1 10.2 5Q6 9 1.8 5z" fill="#fff"/><circle cx="6" cy="5" r="1.6" fill="#3a3a3a"/></svg></div><div class="t" style="left:42.3px">User.Comments</div></div><div class="ly" style="left:856px;top:256.5px;width:141.5px"><div class="sw" style="left:12.4px;background:#b5d9c9"></div><div class="eye" style="left:27px"><svg width="12" height="10" viewBox="0 0 12 10"><ellipse cx="6" cy="5" rx="5.6" ry="4.6" fill="#3a3a3a"/><path d="M1.8 5Q6 1 10.2 5Q6 9 1.8 5z" fill="#fff"/><circle cx="6" cy="5" r="1.6" fill="#3a3a3a"/></svg></div><div class="t" style="left:42.3px">User.Eco1</div></div><div class="ly" style="left:856px;top:269.0px;width:141.5px"><div class="sw" style="left:12.4px;background:#d6c456"></div><div class="eye" style="left:27px"><svg width="12" height="10" viewBox="0 0 12 10"><ellipse cx="6" cy="5" rx="5.6" ry="4.6" fill="#3a3a3a"/><path d="M1.8 5Q6 1 10.2 5Q6 9 1.8 5z" fill="#fff"/><circle cx="6" cy="5" r="1.6" fill="#3a3a3a"/></svg></div><div class="t" style="left:42.3px">User.Eco2</div></div><div class="ly" style="left:856px;top:281.5px;width:141.5px"><div class="sw" style="left:12.4px;background:#d0d2cd"></div><div class="eye" style="left:27px"><svg width="12" height="10" viewBox="0 0 12 10"><ellipse cx="6" cy="5" rx="5.6" ry="4.6" fill="#3a3a3a"/><path d="M1.8 5Q6 1 10.2 5Q6 9 1.8 5z" fill="#fff"/><circle cx="6" cy="5" r="1.6" fill="#3a3a3a"/></svg></div><div class="t" style="left:42.3px">Edge.Cuts</div></div><div class="ly" style="left:856px;top:294.0px;width:141.5px"><div class="sw" style="left:12.4px;background:#ff26e2"></div><div class="eye" style="left:27px"><svg width="12" height="10" viewBox="0 0 12 10"><ellipse cx="6" cy="5" rx="5.6" ry="4.6" fill="#3a3a3a"/><path d="M1.8 5Q6 1 10.2 5Q6 9 1.8 5z" fill="#fff"/><circle cx="6" cy="5" r="1.6" fill="#3a3a3a"/></svg></div><div class="t" style="left:42.3px">Margin</div></div><div class="ly" style="left:856px;top:306.5px;width:141.5px"><div class="sw" style="left:12.4px;background:#ff26e2"></div><div class="eye" style="left:27px"><svg width="12" height="10" viewBox="0 0 12 10"><ellipse cx="6" cy="5" rx="5.6" ry="4.6" fill="#3a3a3a"/><path d="M1.8 5Q6 1 10.2 5Q6 9 1.8 5z" fill="#fff"/><circle cx="6" cy="5" r="1.6" fill="#3a3a3a"/></svg></div><div class="t" style="left:42.3px">F.Courtyard</div></div><div class="ly" style="left:856px;top:319.0px;width:141.5px"><div class="sw" style="left:12.4px;background:#26e9ff"></div><div class="eye" style="left:27px"><svg width="12" height="10" viewBox="0 0 12 10"><ellipse cx="6" cy="5" rx="5.6" ry="4.6" fill="#3a3a3a"/><path d="M1.8 5Q6 1 10.2 5Q6 9 1.8 5z" fill="#fff"/><circle cx="6" cy="5" r="1.6" fill="#3a3a3a"/></svg></div><div class="t" style="left:42.3px">B.Courtyard</div></div><div class="ly" style="left:856px;top:331.5px;width:141.5px"><div class="sw" style="left:12.4px;background:#afafaf"></div><div class="eye" style="left:27px"><svg width="12" height="10" viewBox="0 0 12 10"><ellipse cx="6" cy="5" rx="5.6" ry="4.6" fill="#3a3a3a"/><path d="M1.8 5Q6 1 10.2 5Q6 9 1.8 5z" fill="#fff"/><circle cx="6" cy="5" r="1.6" fill="#3a3a3a"/></svg></div><div class="t" style="left:42.3px">F.Fab</div></div><div class="ly" style="left:856px;top:344.0px;width:141.5px"><div class="sw" style="left:12.4px;background:#585d84"></div><div class="eye" style="left:27px"><svg width="12" height="10" viewBox="0 0 12 10"><ellipse cx="6" cy="5" rx="5.6" ry="4.6" fill="#3a3a3a"/><path d="M1.8 5Q6 1 10.2 5Q6 9 1.8 5z" fill="#fff"/><circle cx="6" cy="5" r="1.6" fill="#3a3a3a"/></svg></div><div class="t" style="left:42.3px">B.Fab</div></div><div class="ly" style="left:856px;top:356.5px;width:141.5px"><div class="sw" style="left:12.4px;background:#c2c2c2"></div><div class="eye" style="left:27px"><svg width="12" height="10" viewBox="0 0 12 10"><ellipse cx="6" cy="5" rx="5.6" ry="4.6" fill="#3a3a3a"/><path d="M1.8 5Q6 1 10.2 5Q6 9 1.8 5z" fill="#fff"/><circle cx="6" cy="5" r="1.6" fill="#3a3a3a"/></svg></div><div class="t" style="left:42.3px">User.1</div></div><div class="ly" style="left:856px;top:369.0px;width:141.5px"><div class="sw" style="left:12.4px;background:#598ad9"></div><div class="eye" style="left:27px"><svg width="12" height="10" viewBox="0 0 12 10"><ellipse cx="6" cy="5" rx="5.6" ry="4.6" fill="#3a3a3a"/><path d="M1.8 5Q6 1 10.2 5Q6 9 1.8 5z" fill="#fff"/><circle cx="6" cy="5" r="1.6" fill="#3a3a3a"/></svg></div><div class="t" style="left:42.3px">User.2</div></div><div class="ly" style="left:856px;top:381.5px;width:141.5px"><div class="sw" style="left:12.4px;background:#b5d9c9"></div><div class="eye" style="left:27px"><svg width="12" height="10" viewBox="0 0 12 10"><ellipse cx="6" cy="5" rx="5.6" ry="4.6" fill="#3a3a3a"/><path d="M1.8 5Q6 1 10.2 5Q6 9 1.8 5z" fill="#fff"/><circle cx="6" cy="5" r="1.6" fill="#3a3a3a"/></svg></div><div class="t" style="left:42.3px">User.3</div></div><div class="ly" style="left:856px;top:394.0px;width:141.5px"><div class="sw" style="left:12.4px;background:#d6c456"></div><div class="eye" style="left:27px"><svg width="12" height="10" viewBox="0 0 12 10"><ellipse cx="6" cy="5" rx="5.6" ry="4.6" fill="#3a3a3a"/><path d="M1.8 5Q6 1 10.2 5Q6 9 1.8 5z" fill="#fff"/><circle cx="6" cy="5" r="1.6" fill="#3a3a3a"/></svg></div><div class="t" style="left:42.3px">User.4</div></div><svg class="a" style="left:859px;top:183.5px" width="5" height="7" viewBox="0 0 5 7"><path d="M0 0l5 3.5L0 7z" fill="#2a4ad0"/></svg><div class="a" style="left:856px;top:418px;width:141.5px;height:19px;background:#e6e6e6"></div><svg class="a" style="left:864.5px;top:424.5px" width="4" height="6" viewBox="0 0 4 6"><path d="M0 0l4 3-4 3z" fill="#999"/></svg><div class="a" style="left:870.5px;top:422px;font-size:8.6px;line-height:11px;color:#b0b0b0">Layer Display Options</div><div class="a" style="left:859.5px;top:438.5px;font-size:8.7px;line-height:11px;color:#333">Presets (Ctrl+Tab):</div><div class="a" style="left:859px;top:451.7px;width:135.5px;height:13px;background:#fff;border-radius:3px;box-shadow:0 0 0 .5px #d8d8d8"><div class="a" style="left:6px;top:6px;width:116px;height:1px;background:#e4e4e4"></div><svg class="a" style="right:3.5px;top:2.5px" width="6" height="8" viewBox="0 0 6 8"><path d="M1 3L3 1 5 3M1 5L3 7 5 5" fill="none" stroke="#2a2a2a" stroke-width="1.25"/></svg></div><div class="a" style="left:859.5px;top:468px;font-size:8.7px;line-height:11px;color:#333">Viewports (Option+Tab):</div><div class="a" style="left:859px;top:481px;width:135.5px;height:13px;background:#fff;border-radius:3px;box-shadow:0 0 0 .5px #d8d8d8"><div class="a" style="left:6px;top:6px;width:116px;height:1px;background:#e4e4e4"></div><svg class="a" style="right:3.5px;top:2.5px" width="6" height="8" viewBox="0 0 6 8"><path d="M1 3L3 1 5 3M1 5L3 7 5 5" fill="none" stroke="#2a2a2a" stroke-width="1.25"/></svg></div><div class="a" style="left:926.5px;top:497.5px;width:2.5px;height:2.5px;border-radius:50%;background:#c8c8c8"></div><div class="a" style="left:855.5px;top:503.2px;width:144.5px;height:10.5px;background:#c4c4c4"></div><div class="a" style="left:857.3px;top:503.2px;font-size:8.1px;line-height:10.5px;color:#3a3a3a">Selection Filter</div><div class="ck" style="left:858.8px;top:519.4px"></div><div class="sf" style="left:872.4px;top:517.9px">All items</div><div class="ck no" style="left:928.7px;top:519.4px"></div><div class="sf" style="left:942px;top:517.9px">Locked items</div><div class="ck" style="left:858.8px;top:530.55px"></div><div class="sf" style="left:872.4px;top:529.05px">Footprints</div><div class="ck" style="left:928.7px;top:530.55px"></div><div class="sf" style="left:942px;top:529.05px">Text</div><div class="ck" style="left:858.8px;top:541.6999999999999px"></div><div class="sf" style="left:872.4px;top:540.1999999999999px">Tracks</div><div class="ck" style="left:928.7px;top:541.6999999999999px"></div><div class="sf" style="left:942px;top:540.1999999999999px">Vias</div><div class="ck" style="left:858.8px;top:552.85px"></div><div class="sf" style="left:872.4px;top:551.35px">Pads</div><div class="ck" style="left:928.7px;top:552.85px"></div><div class="sf" style="left:942px;top:551.35px">Graphics</div><div class="ck" style="left:858.8px;top:564.0px"></div><div class="sf" style="left:872.4px;top:562.5px">Zones</div><div class="ck" style="left:928.7px;top:564.0px"></div><div class="sf" style="left:942px;top:562.5px">Rule Areas</div><div class="ck" style="left:858.8px;top:575.15px"></div><div class="sf" style="left:872.4px;top:573.65px">Dimensions</div><div class="ck" style="left:928.7px;top:575.15px"></div><div class="sf" style="left:942px;top:573.65px">Other items</div>  <div id="dlg" class="a" style="left:327px;top:116px;width:459px;height:441px;background:#ececec;border-radius:10px;box-shadow:0 0 0 0.5px rgba(0,0,0,.35),0 8px 24px rgba(0,0,0,.45);overflow:hidden;font-size:9.3px;color:#2b2b2b">
    <div class="a" style="left:0;top:0;width:459px;height:19px;background:#eeeef0;border-bottom:1px solid #dcdcdc"></div>
    <div class="a" style="left:5px;top:5px;width:9.5px;height:9.5px;border-radius:50%;background:#fe5f57;box-shadow:inset 0 0 0 .5px #e0443e"></div>
    <div class="a" style="left:19px;top:5px;width:9.5px;height:9.5px;border-radius:50%;background:#d5d5d5"></div>
    <div class="a" style="left:32.5px;top:5px;width:9.5px;height:9.5px;border-radius:50%;background:#28c840;box-shadow:inset 0 0 0 .5px #1aab29"></div>
    <div class="a" style="left:0;top:3px;width:459px;text-align:center;font-weight:bold;font-size:9.15px;line-height:12px;color:#333">Design Rules Checker</div>
    <!-- checkboxes -->
    <div class="a cbx on" style="left:9px;top:29px"></div><div class="a lbl" style="left:23.5px;top:28px">Refill all zones before performing DRC</div>
    <div class="a cbx" style="left:9px;top:44px"></div><div class="a lbl" style="left:23.5px;top:43px">Report all errors for each track</div>
    <div class="a cbx" style="left:237.5px;top:29px"></div><div class="a lbl" style="left:251.5px;top:28px">Test for parity between PCB and schematic</div>
    <!-- notebook -->
    <div class="a" style="left:7.5px;top:79.5px;width:442px;height:309px;background:#e4e4e4;border-radius:5px;box-shadow:inset 0 0 0 .5px #dadada"></div>
    <div class="a" style="left:28px;top:72px;width:401px;height:16px;background:#dddddd;border-radius:5px;box-shadow:inset 0 0 0 .5px #d2d2d2"></div>
    <div class="a" style="left:31px;top:73px;width:71px;height:14px;background:#fff;border-radius:4px;box-shadow:0 .5px 1px rgba(0,0,0,.15)"></div>
    <div class="a lbl" style="left:38.5px;top:74.5px">Violations (2)</div>
    <div class="a lbl" style="left:109.5px;top:74.5px">Unconnected Items (0)</div>
    <div class="a" style="left:213.5px;top:76.5px;width:1px;height:8px;background:#c8c8c8"></div>
    <div class="a lbl" style="left:222px;top:74.5px">Schematic Parity (not run)</div>
    <div class="a" style="left:339.5px;top:76.5px;width:1px;height:8px;background:#c8c8c8"></div>
    <div class="a lbl" style="left:347.5px;top:74.5px">Ignored Tests (5)</div>
    <div class="a" style="left:12px;top:93.5px;width:433.5px;height:291.5px;background:#fff"></div>
    <svg class="a" style="left:21.5px;top:105px" width="6" height="4" viewBox="0 0 6 4"><path d="M.6 .8L3 3.2 5.4 .8" fill="none" stroke="#555" stroke-width="1"/></svg>
    <div class="a lbl" style="left:31.5px;top:101px;font-weight:bold;color:#222">Warning: Silkscreen clipped by solder mask</div>
    <div class="a lbl" style="left:36.5px;top:113px">Segment of M1 on F.Silkscreen</div>
    <svg class="a" style="left:21.5px;top:129px" width="6" height="4" viewBox="0 0 6 4"><path d="M.6 .8L3 3.2 5.4 .8" fill="none" stroke="#555" stroke-width="1"/></svg>
    <div class="a lbl" style="left:31.5px;top:125px;font-weight:bold;color:#222">Warning: Silkscreen clipped by solder mask</div>
    <div class="a lbl" style="left:36.5px;top:136.5px">Segment of M1 on F.Silkscreen</div>
    <!-- show row -->
    <div class="a lbl" style="left:10.5px;top:395px">Show:</div>
    <div class="a cbx" style="left:43.5px;top:396px"></div><div class="a lbl" style="left:57.5px;top:395px">All</div>
    <div class="a cbx on" style="left:102px;top:396px"></div><div class="a lbl" style="left:116px;top:395px">Errors</div>
    <div class="a" style="left:147.5px;top:395.5px;width:11px;height:11px;border-radius:4px;background:#1e7a1e;color:#fff;font-size:7.5px;font-weight:bold;text-align:center;line-height:11px">0</div>
    <div class="a cbx on" style="left:180px;top:396px"></div><div class="a lbl" style="left:194px;top:395px">Warnings</div>
    <div class="a" style="left:239px;top:395.5px;width:11px;height:11px;border-radius:4px;background:#f5f51e;color:#333;font-size:7.5px;font-weight:bold;text-align:center;line-height:11px">2</div>
    <div class="a cbx" style="left:271.5px;top:396px"></div><div class="a lbl" style="left:285.5px;top:395px">Exclusions</div>
    <div class="a btn" style="left:390px;top:394.5px;width:58px">Save...</div>
    <div class="a btn" style="left:10px;top:419.5px;width:72.5px">Delete Marker</div>
    <div class="a btn" style="left:90px;top:419.5px;width:91px">Delete All Markers</div>
    <div class="a btn" style="left:324.5px;top:419px;width:57.5px;background:#1a73e8;background:linear-gradient(#3b8cf5,#1f6fe0);color:#fff;font-weight:bold;font-size:8.4px;line-height:14.5px;height:13.8px;box-shadow:none">Close</div>
    <div class="a btn" style="left:391px;top:419.5px;width:57.5px;font-size:8.7px">Run DRC</div>
  </div>
<div class="a" style="left:0;top:587px;width:1000px;height:21px;background:#ececec"></div><div class="a" style="left:0;top:606px;width:1000px;height:2px;background:#e2e2e2"></div><div class="a st" style="left:8px;top:589.5px">Pads</div><div class="a st" style="left:8px;top:598.5px">77</div><div class="a st" style="left:47px;top:589.5px">Vias</div><div class="a st" style="left:47px;top:598.5px">0</div><div class="a st" style="left:83.5px;top:589.5px">Track Segments</div><div class="a st" style="left:83.5px;top:598.5px">88</div><div class="a st" style="left:163px;top:589.5px">Nets</div><div class="a st" style="left:163px;top:598.5px">30</div><div class="a st" style="left:201px;top:589.5px">Unrouted</div><div class="a st" style="left:201px;top:598.5px">0</div></div></body></html>
